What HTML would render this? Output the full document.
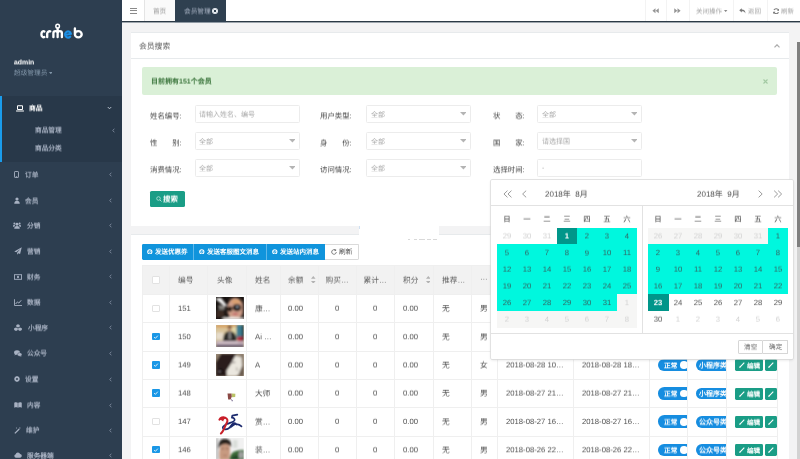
<!DOCTYPE html>
<html lang="zh-CN"><head><meta charset="utf-8"><title>会员管理</title>
<style>
html,body{margin:0;padding:0;background:#f3f3f4;}
body{width:800px;height:459px;overflow:hidden;position:relative;font-family:"Liberation Sans",sans-serif;-webkit-text-size-adjust:none;text-rendering:geometricPrecision;}
#page{position:absolute;left:0;top:0;width:800px;height:459px;overflow:hidden;background:#f3f3f4;}
#side{position:absolute;left:0;top:0;width:122px;height:459px;background:#2d3e50;overflow:hidden;}
.r{position:absolute;display:block;}
.t{position:absolute;white-space:nowrap;overflow:visible;will-change:transform;}
#dp{background:#fff;box-shadow:0 0 0 0.7px #dadada, 0 1px 3px rgba(0,0,0,.14);border-radius:1px;overflow:hidden;}
</style></head><body><div id="page">
<div id="side">
<div class="r" style="left:0px;top:95.7px;width:122px;height:66.6px;background:#283849;"></div>
<div class="r" style="left:0px;top:95.7px;width:2.4px;height:66.6px;background:#1a9cec;"></div>
<svg class="r" style="left:38px;top:22px" width="48" height="19" viewBox="38 22 48 19">
<g fill="none" stroke="#fff" stroke-width="2.35" stroke-linecap="round">
<path d="M44.4 31.4 A2.15 3.05 0 1 0 44.4 37"/>
<path d="M47.2 37.1 V33.5 A2.5 2.5 0 0 1 50.3 31.3"/>
<path d="M53.4 37.1 V33.3 A2.12 2.12 0 0 1 57.64 33.3 V37.1 M57.64 33.3 A2.12 2.12 0 0 1 61.88 33.3 V37.1 M57.64 33 V29"/>
<path d="M74.9 28.5 V34.4 M74.9 34.2 A3.4 3.1 0 1 0 78.3 31.1 A3.4 3.1 0 0 0 74.9 34.2"/>
</g>
<circle cx="57.64" cy="26.15" r="1.8" fill="none" stroke="#fff" stroke-width="1.5"/>
<path d="M65.4 35 L70.9 33.8 A2.95 3.1 0 1 0 70.3 36.5" fill="none" stroke="#1a8fe6" stroke-width="2.05" stroke-linecap="round"/>
</svg>
<div class="t" style="left:14px;top:57px;transform:translateY(0.48px) rotate(0.02deg);height:11.04px;line-height:11.04px;font-size:6.9px;color:#fff;font-weight:bold;">admin</div>
<div class="t" style="left:14px;top:69px;transform:translateY(0.08px) rotate(0.02deg);height:10.72px;line-height:10.72px;font-size:6.7px;color:#8095a8;font-weight:normal;">超级管理员</div>
<svg class="r" style="left:48.80px;top:71.80px" width="3.6" height="2.2" viewBox="0 0 3.6 2.2"><polygon points="0,0 3.6,0 1.8,2.2" fill="#8095a8"/></svg>
<svg class="r" style="left:16.2px;top:104.6px" width="8" height="7" viewBox="0 0 16 14"><path d="M3 1.5h10v7.5h-10z" fill="none" stroke="#fff" stroke-width="2"/><path d="M0 11h16v1.2a1 1 0 0 1-1 1h-14a1 1 0 0 1-1-1z" fill="#fff"/></svg>
<div class="t" style="left:28.5px;top:104px;transform:translateY(0.40px) rotate(0.02deg);height:10.88px;line-height:10.88px;font-size:6.8px;color:#fff;font-weight:bold;">商品</div>
<svg class="r" style="left:106.6px;top:106.4px" width="5" height="4" viewBox="0 0 10 8"><path d="M1.5 2 L5 5.6 L8.5 2" fill="none" stroke="#c4ccd8" stroke-width="1.8"/></svg>
<div class="t" style="left:35px;top:126px;transform:translateY(0.41px) rotate(0.02deg);height:10.72px;line-height:10.72px;font-size:6.7px;color:#a7b1c2;font-weight:600;">商品管理</div>
<div class="t" style="left:35px;top:144px;transform:translateY(0.45px) rotate(0.02deg);height:10.72px;line-height:10.72px;font-size:6.7px;color:#a7b1c2;font-weight:600;">商品分类</div>
<svg class="r" style="left:111.6px;top:127.5px" width="3" height="5" viewBox="0 0 6 10"><path d="M4.6 1.4 L1.6 5 L4.6 8.6" fill="none" stroke="#8f9bae" stroke-width="1.5"/></svg>
<svg class="r" style="left:14px;top:171.1px" width="5" height="7" viewBox="0 0 10 14"><rect x="1" y="1" width="8" height="12" rx="1.2" fill="none" stroke="#a7b1c2" stroke-width="1.8"/><rect x="3.5" y="10" width="3" height="1.4" fill="#a7b1c2"/></svg>
<div class="t" style="left:24.5px;top:171px;transform:translateY(0.19px) rotate(0.02deg);height:10.72px;line-height:10.72px;font-size:6.7px;color:#a7b1c2;font-weight:600;">订单</div>
<svg class="r" style="left:108.6px;top:172.1px" width="3" height="5" viewBox="0 0 6 10"><path d="M4.6 1.4 L1.6 5 L4.6 8.6" fill="none" stroke="#8f9bae" stroke-width="1.5"/></svg>
<svg class="r" style="left:13.6px;top:197.3px" width="6" height="7" viewBox="0 0 12 14"><circle cx="6" cy="4" r="3.2" fill="#a7b1c2"/><path d="M0.5 13.5c0-4 2-6 5.5-6s5.5 2 5.500 6z" fill="#a7b1c2"/></svg>
<div class="t" style="left:24.5px;top:197px;transform:translateY(0.34px) rotate(0.02deg);height:10.72px;line-height:10.72px;font-size:6.7px;color:#a7b1c2;font-weight:600;">会员</div>
<svg class="r" style="left:108.6px;top:198.3px" width="3" height="5" viewBox="0 0 6 10"><path d="M4.6 1.4 L1.6 5 L4.6 8.6" fill="none" stroke="#8f9bae" stroke-width="1.5"/></svg>
<svg class="r" style="left:13.4px;top:222.0px" width="8" height="7" viewBox="0 0 16 14"><circle cx="8" cy="4.4" r="2.9" fill="#a7b1c2"/><circle cx="2.8" cy="3" r="2" fill="#a7b1c2"/><circle cx="13.2" cy="3" r="2" fill="#a7b1c2"/><path d="M2.5 13.5c0-3.6 2-5.4 5.500-5.400s5.500 1.800 5.500 5.400z" fill="#a7b1c2"/><path d="M0 8.500c0-2 1-3 2.800-3l1.400 1.600-1.400 2.400h-2.800zM16 8.500c0-2-1-3-2.800-3l-1.400 1.600 1.400 2.400h2.800z" fill="#a7b1c2"/></svg>
<div class="t" style="left:27px;top:222px;transform:translateY(0.10px) rotate(0.02deg);height:10.72px;line-height:10.72px;font-size:6.7px;color:#a7b1c2;font-weight:600;">分销</div>
<svg class="r" style="left:108.6px;top:223.0px" width="3" height="5" viewBox="0 0 6 10"><path d="M4.6 1.4 L1.6 5 L4.6 8.6" fill="none" stroke="#8f9bae" stroke-width="1.5"/></svg>
<svg class="r" style="left:13.6px;top:247.3px" width="8" height="8" viewBox="0 0 16 16"><path d="M15.500 0.500 L0.500 8.800 L4.600 10.600 L12.500 3.800 L6.200 11.500 L6.200 15.500 L8.600 12.500 L12.200 14 z" fill="#a7b1c2"/></svg>
<div class="t" style="left:27px;top:247px;transform:translateY(0.71px) rotate(0.02deg);height:10.72px;line-height:10.72px;font-size:6.7px;color:#a7b1c2;font-weight:600;">营销</div>
<svg class="r" style="left:108.6px;top:248.8px" width="3" height="5" viewBox="0 0 6 10"><path d="M4.6 1.4 L1.6 5 L4.6 8.6" fill="none" stroke="#8f9bae" stroke-width="1.5"/></svg>
<svg class="r" style="left:13.6px;top:273.8px" width="8" height="6" viewBox="0 0 16 12"><rect x="0.900" y="1.400" width="14.200" height="9.200" fill="none" stroke="#a7b1c2" stroke-width="1.8"/><ellipse cx="8" cy="6" rx="2" ry="2.700" fill="#a7b1c2"/></svg>
<div class="t" style="left:27px;top:273px;transform:translateY(0.44px) rotate(0.02deg);height:10.72px;line-height:10.72px;font-size:6.7px;color:#a7b1c2;font-weight:600;">财务</div>
<svg class="r" style="left:108.6px;top:274.3px" width="3" height="5" viewBox="0 0 6 10"><path d="M4.6 1.4 L1.6 5 L4.6 8.6" fill="none" stroke="#8f9bae" stroke-width="1.5"/></svg>
<svg class="r" style="left:13.6px;top:298.7px" width="8" height="7" viewBox="0 0 16 14"><path d="M1 0.500 V13 H16" fill="none" stroke="#a7b1c2" stroke-width="1.800"/><path d="M3.200 10 L7 5.800 L9.600 8.200 L14.400 2.600" fill="none" stroke="#a7b1c2" stroke-width="2"/></svg>
<div class="t" style="left:27px;top:298px;transform:translateY(0.63px) rotate(0.02deg);height:10.72px;line-height:10.72px;font-size:6.7px;color:#a7b1c2;font-weight:600;">数据</div>
<svg class="r" style="left:108.6px;top:299.7px" width="3" height="5" viewBox="0 0 6 10"><path d="M4.6 1.4 L1.6 5 L4.6 8.6" fill="none" stroke="#8f9bae" stroke-width="1.5"/></svg>
<svg class="r" style="left:14px;top:324.3px" width="8" height="7" viewBox="0 0 16 14"><path d="M8 0.300 l3.400 1.600 v3.600 l-3.400 1.700 l-3.400-1.700 v-3.600z M4 6.800 l3.600 1.700 v3.700 l-3.600 1.700 l-3.700-1.700 v-3.700z M12 6.800 l3.700 1.700 v3.700 l-3.700 1.700 l-3.600-1.700 v-3.700z" fill="#a7b1c2"/></svg>
<div class="t" style="left:28px;top:324px;transform:translateY(0.27px) rotate(0.02deg);height:10.72px;line-height:10.72px;font-size:6.7px;color:#a7b1c2;font-weight:600;">小程序</div>
<svg class="r" style="left:108.6px;top:325.3px" width="3" height="5" viewBox="0 0 6 10"><path d="M4.6 1.4 L1.6 5 L4.6 8.6" fill="none" stroke="#8f9bae" stroke-width="1.5"/></svg>
<svg class="r" style="left:13.8px;top:349.7px" width="8" height="7" viewBox="0 0 16 14"><ellipse cx="6" cy="5" rx="5.800" ry="4.700" fill="#a7b1c2"/><path d="M2 8l-0.800 2.800 3-1.600z" fill="#a7b1c2"/><ellipse cx="11.400" cy="9" rx="4.500" ry="3.700" fill="#a7b1c2" stroke="#2f4050" stroke-width="0.800"/><path d="M14 11.500l0.800 2-2.400-1z" fill="#a7b1c2"/></svg>
<div class="t" style="left:27px;top:349px;transform:translateY(0.53px) rotate(0.02deg);height:10.72px;line-height:10.72px;font-size:6.7px;color:#a7b1c2;font-weight:600;">公众号</div>
<svg class="r" style="left:108.6px;top:350.7px" width="3" height="5" viewBox="0 0 6 10"><path d="M4.6 1.4 L1.6 5 L4.6 8.6" fill="none" stroke="#8f9bae" stroke-width="1.5"/></svg>
<svg class="r" style="left:14px;top:376.1px" width="6" height="6" viewBox="0 0 12 12"><circle cx="6" cy="6" r="3.400" fill="none" stroke="#a7b1c2" stroke-width="3"/><g stroke="#a7b1c2" stroke-width="2.400" fill="none"><path d="M6 0v2.200M6 9.800v2.200M0 6h2.200M9.800 6h2.200M1.760 1.760l1.560 1.560M8.680 8.680l1.560 1.560M10.240 1.760l-1.560 1.560M3.320 8.680l-1.560 1.560"/></g></svg>
<div class="t" style="left:25px;top:375px;transform:translateY(0.59px) rotate(0.02deg);height:10.72px;line-height:10.72px;font-size:6.7px;color:#a7b1c2;font-weight:600;">设置</div>
<svg class="r" style="left:108.6px;top:376.6px" width="3" height="5" viewBox="0 0 6 10"><path d="M4.6 1.4 L1.6 5 L4.6 8.6" fill="none" stroke="#8f9bae" stroke-width="1.5"/></svg>
<svg class="r" style="left:13.8px;top:402.0px" width="8" height="6" viewBox="0 0 16 12"><path d="M0.500 1.500 C3 0.300 5.500 0.300 7.500 1.700 V11.500 C5.500 10.300 3 10.300 0.500 11.300z M15.500 1.500 C13 0.300 10.500 0.300 8.500 1.700 V11.500 C10.500 10.300 13 10.300 15.500 11.300z" fill="#a7b1c2"/></svg>
<div class="t" style="left:27px;top:401px;transform:translateY(0.44px) rotate(0.02deg);height:10.72px;line-height:10.72px;font-size:6.7px;color:#a7b1c2;font-weight:600;">内容</div>
<svg class="r" style="left:108.6px;top:402.5px" width="3" height="5" viewBox="0 0 6 10"><path d="M4.6 1.4 L1.6 5 L4.6 8.6" fill="none" stroke="#8f9bae" stroke-width="1.5"/></svg>
<svg class="r" style="left:14px;top:426.5px" width="7" height="7" viewBox="0 0 14 14"><path d="M0.800 11.800 L9.600 3 L11.400 4.800 L2.600 13.600z" fill="#a7b1c2"/><path d="M11.800 0l.6 1.500 1.500.6-1.500.6-.6 1.500-.6-1.500-1.500-.6 1.500-.6zM5 0.600l.5 1.100 1.100.5-1.100.5-.5 1.100-.5-1.100-1.100-.5 1.100-.5z" fill="#a7b1c2"/></svg>
<div class="t" style="left:25.5px;top:426px;transform:translateY(0.45px) rotate(0.02deg);height:10.72px;line-height:10.72px;font-size:6.7px;color:#a7b1c2;font-weight:600;">维护</div>
<svg class="r" style="left:108.6px;top:427.5px" width="3" height="5" viewBox="0 0 6 10"><path d="M4.6 1.4 L1.6 5 L4.6 8.6" fill="none" stroke="#8f9bae" stroke-width="1.5"/></svg>
<svg class="r" style="left:13.8px;top:452.4px" width="8" height="6" viewBox="0 0 16 12"><path d="M4 11.500 a3.600 3.600 0 0 1-.6-7.100 a4.600 4.600 0 0 1 8.800-.6 a3.900 3.900 0 0 1 .200 7.700z" fill="#a7b1c2"/></svg>
<div class="t" style="left:27px;top:451px;transform:translateY(0.96px) rotate(0.02deg);height:10.72px;line-height:10.72px;font-size:6.7px;color:#a7b1c2;font-weight:600;">服务器端</div>
<svg class="r" style="left:108.6px;top:452.9px" width="3" height="5" viewBox="0 0 6 10"><path d="M4.6 1.4 L1.6 5 L4.6 8.6" fill="none" stroke="#8f9bae" stroke-width="1.5"/></svg>
</div>
<div class="r" style="left:122px;top:0px;width:678px;height:21.3px;background:#fff;"></div>
<div class="r" style="left:122px;top:21px;width:678px;height:1px;background:#2c3a46;"></div>
<div class="r" style="left:122px;top:22px;width:678px;height:1px;background:#9ea6ad;"></div>
<div class="r" style="left:129.8px;top:8.0px;width:7.4px;height:1.0px;background:#8a8a8a;"></div>
<div class="r" style="left:129.8px;top:10.4px;width:7.4px;height:1.0px;background:#8a8a8a;"></div>
<div class="r" style="left:129.8px;top:12.8px;width:7.4px;height:1.0px;background:#8a8a8a;"></div>
<div class="r" style="left:144px;top:0px;width:31.2px;height:21.3px;background:#fafafa;border-left:0.6px solid #e4e4e4;box-sizing:border-box"></div>
<div class="t" style="left:144px;top:7px;transform:translateY(0.43px) rotate(0.02deg);height:10.72px;line-height:10.72px;font-size:6.7px;color:#999;font-weight:normal;width:31.2px;text-align:center;">首页</div>
<div class="r" style="left:175.2px;top:0px;width:50.6px;height:22px;background:#2f4050;"></div>
<div class="r" style="left:175.2px;top:22px;width:50.6px;height:1px;background:#8f99a3;"></div>
<div class="t" style="left:183.6px;top:7px;transform:translateY(0.48px) rotate(0.02deg);height:10.72px;line-height:10.72px;font-size:6.7px;color:#a7b1c2;font-weight:normal;">会员管理</div>
<svg class="r" style="left:212px;top:8px" width="6" height="6" viewBox="0 0 12 12"><circle cx="6" cy="6" r="6" fill="#e9edf2"/><path d="M3.700 3.700 L8.300 8.300 M8.300 3.700 L3.700 8.300" stroke="#2f4050" stroke-width="2"/></svg>
<div class="r" style="left:644.5px;top:0px;width:0.6px;height:21px;background:#f3f3f3;"></div>
<div class="r" style="left:666.4px;top:0px;width:0.6px;height:21px;background:#f3f3f3;"></div>
<div class="r" style="left:689.2px;top:0px;width:0.6px;height:21px;background:#f3f3f3;"></div>
<div class="r" style="left:733.2px;top:0px;width:0.6px;height:21px;background:#f3f3f3;"></div>
<div class="r" style="left:767px;top:0px;width:0.6px;height:21px;background:#f3f3f3;"></div>
<svg class="r" style="left:652px;top:8.2px" width="7" height="5.600" viewBox="0 0 14 11"><path d="M7 0.500 V10.500 L0.800 5.500z M13.500 0.500 V10.500 L7.300 5.500z" fill="#959595"/></svg>
<svg class="r" style="left:674px;top:8.2px" width="7" height="5.600" viewBox="0 0 14 11"><path d="M0.500 0.500 V10.500 L6.700 5.500z M7 0.500 V10.500 L13.200 5.500z" fill="#959595"/></svg>
<div class="t" style="left:696px;top:7px;transform:translateY(0.49px) rotate(0.02deg);height:10.40px;line-height:10.40px;font-size:6.5px;color:#a6a6a6;font-weight:normal;">关闭操作</div>
<svg class="r" style="left:724.30px;top:10.10px" width="3.4" height="2.1" viewBox="0 0 3.4 2.1"><polygon points="0,0 3.4,0 1.7,2.1" fill="#8a8a8a"/></svg>
<svg class="r" style="left:739px;top:7.600px" width="7" height="6" viewBox="0 0 14 12"><path d="M5.500 0.500 L0.500 4.700 L5.500 8.900 V6.300 C9.500 6.300 11.500 7.500 12.800 11 C13 6 10.500 3.300 5.500 3.100z" fill="#777"/></svg>
<div class="t" style="left:747.6px;top:7px;transform:translateY(0.38px) rotate(0.02deg);height:10.40px;line-height:10.40px;font-size:6.5px;color:#a6a6a6;font-weight:normal;">返回</div>
<svg class="r" style="left:773px;top:7.800px" width="6.400" height="6.400" viewBox="0 0 14 14"><path d="M12.200 5.200 A5.600 5.600 0 0 0 2 4.600 M1.800 8.800 A5.600 5.600 0 0 0 12 9.400" fill="none" stroke="#777" stroke-width="2.200"/><path d="M13.600 1 V6 H8.600z M0.400 13 V8 H5.400z" fill="#777"/></svg>
<div class="t" style="left:780.6px;top:7px;transform:translateY(0.40px) rotate(0.02deg);height:10.40px;line-height:10.40px;font-size:6.5px;color:#a6a6a6;font-weight:normal;">刷新</div>
<div class="r" style="left:131px;top:32.2px;width:657.5px;height:193.4px;background:#fff;"></div>
<div class="r" style="left:131px;top:32.2px;width:657.5px;height:1.1px;background:#e7eaec;"></div>
<div class="r" style="left:131px;top:58.0px;width:657.5px;height:0.6px;background:#e7eaec;"></div>
<div class="t" style="left:139px;top:40px;transform:translateY(0.72px) rotate(0.02deg);height:12.48px;line-height:12.48px;font-size:7.8px;color:#555;font-weight:normal;">会员搜索</div>
<svg class="r" style="left:774px;top:44px" width="6" height="4" viewBox="0 0 12 8"><path d="M1 6.800 L6 1.600 L11 6.800" fill="none" stroke="#adadad" stroke-width="2.500"/></svg>
<div class="r" style="left:142px;top:67px;width:635px;height:27.6px;background:#daf0d7;border-radius:2px"></div>
<div class="t" style="left:151px;top:76px;transform:translateY(0.57px) rotate(0.02deg);height:11.20px;line-height:11.20px;font-size:7.0px;color:#3c763d;font-weight:bold;">目前拥有151个会员</div>
<svg class="r" style="left:762.600px;top:78.600px" width="5" height="5" viewBox="0 0 10 10"><path d="M1 1 L9 9 M9 1 L1 9" stroke="#a3c9a3" stroke-width="2.200"/></svg>
<div class="t" style="left:150.4px;top:110px;transform:translateY(0.52px) rotate(0.02deg);height:11.84px;line-height:11.84px;font-size:7.4px;color:#454545;font-weight:normal;white-space:nowrap;">姓名编号:</div>
<div class="r" style="left:194.5px;top:105.2px;width:105.5px;height:18.1px;background:#fff;border:0.700px solid #ececec;border-radius:1.500px;box-sizing:border-box"></div>
<div class="t" style="left:199.1px;top:109px;transform:translateY(0.74px) rotate(0.02deg);height:11.20px;line-height:11.20px;font-size:7.0px;color:#a8a8a8;font-weight:normal;">请输入姓名、编号</div>
<div class="t" style="left:150.4px;top:137px;transform:translateY(0.46px) rotate(0.02deg);height:11.84px;line-height:11.84px;font-size:7.4px;color:#454545;font-weight:normal;white-space:nowrap;">性&emsp;&emsp;别:</div>
<div class="r" style="left:194.5px;top:132.2px;width:105.5px;height:18.1px;background:#fff;border:0.700px solid #ececec;border-radius:1.500px;box-sizing:border-box"></div>
<div class="t" style="left:199.1px;top:137px;transform:translateY(0.06px) rotate(0.02deg);height:11.20px;line-height:11.20px;font-size:7.0px;color:#a8a8a8;font-weight:normal;">全部</div>
<svg class="r" style="left:288.50px;top:139.40px" width="6.8" height="3.4" viewBox="0 0 6.8 3.4"><polygon points="0,0 6.8,0 3.4,3.4" fill="#b4b4b4"/></svg>
<div class="t" style="left:150.4px;top:164px;transform:translateY(0.28px) rotate(0.02deg);height:11.84px;line-height:11.84px;font-size:7.4px;color:#454545;font-weight:normal;white-space:nowrap;">消费情况:</div>
<div class="r" style="left:194.5px;top:159.2px;width:105.5px;height:18.1px;background:#fff;border:0.700px solid #ececec;border-radius:1.500px;box-sizing:border-box"></div>
<div class="t" style="left:199.1px;top:163px;transform:translateY(0.85px) rotate(0.02deg);height:11.20px;line-height:11.20px;font-size:7.0px;color:#a8a8a8;font-weight:normal;">全部</div>
<svg class="r" style="left:288.50px;top:166.30px" width="6.8" height="3.4" viewBox="0 0 6.8 3.4"><polygon points="0,0 6.8,0 3.4,3.4" fill="#b4b4b4"/></svg>
<div class="t" style="left:320.4px;top:110px;transform:translateY(0.41px) rotate(0.02deg);height:11.84px;line-height:11.84px;font-size:7.4px;color:#454545;font-weight:normal;white-space:nowrap;">用户类型:</div>
<div class="r" style="left:366.2px;top:105.2px;width:105px;height:18.1px;background:#fff;border:0.700px solid #ececec;border-radius:1.500px;box-sizing:border-box"></div>
<div class="t" style="left:370.8px;top:110px;transform:translateY(0.06px) rotate(0.02deg);height:11.20px;line-height:11.20px;font-size:7.0px;color:#a8a8a8;font-weight:normal;">全部</div>
<svg class="r" style="left:459.70px;top:112.40px" width="6.8" height="3.4" viewBox="0 0 6.8 3.4"><polygon points="0,0 6.8,0 3.4,3.4" fill="#b4b4b4"/></svg>
<div class="t" style="left:320.4px;top:137px;transform:translateY(0.58px) rotate(0.02deg);height:11.84px;line-height:11.84px;font-size:7.4px;color:#454545;font-weight:normal;white-space:nowrap;">身&emsp;&emsp;份:</div>
<div class="r" style="left:366.2px;top:132.2px;width:105px;height:18.1px;background:#fff;border:0.700px solid #ececec;border-radius:1.500px;box-sizing:border-box"></div>
<div class="t" style="left:370.8px;top:137px;transform:translateY(0.06px) rotate(0.02deg);height:11.20px;line-height:11.20px;font-size:7.0px;color:#a8a8a8;font-weight:normal;">全部</div>
<svg class="r" style="left:459.70px;top:139.40px" width="6.8" height="3.4" viewBox="0 0 6.8 3.4"><polygon points="0,0 6.8,0 3.4,3.4" fill="#b4b4b4"/></svg>
<div class="t" style="left:320.4px;top:164px;transform:translateY(0.22px) rotate(0.02deg);height:11.84px;line-height:11.84px;font-size:7.4px;color:#454545;font-weight:normal;white-space:nowrap;">访问情况:</div>
<div class="r" style="left:366.2px;top:159.2px;width:105px;height:18.1px;background:#fff;border:0.700px solid #ececec;border-radius:1.500px;box-sizing:border-box"></div>
<div class="t" style="left:370.8px;top:163px;transform:translateY(0.85px) rotate(0.02deg);height:11.20px;line-height:11.20px;font-size:7.0px;color:#a8a8a8;font-weight:normal;">全部</div>
<svg class="r" style="left:459.70px;top:166.30px" width="6.8" height="3.4" viewBox="0 0 6.8 3.4"><polygon points="0,0 6.8,0 3.4,3.4" fill="#b4b4b4"/></svg>
<div class="t" style="left:493.4px;top:110px;transform:translateY(0.40px) rotate(0.02deg);height:11.84px;line-height:11.84px;font-size:7.4px;color:#454545;font-weight:normal;white-space:nowrap;">状&emsp;&emsp;态:</div>
<div class="r" style="left:537px;top:105.2px;width:105.2px;height:18.1px;background:#fff;border:0.700px solid #ececec;border-radius:1.500px;box-sizing:border-box"></div>
<div class="t" style="left:541.6px;top:110px;transform:translateY(0.06px) rotate(0.02deg);height:11.20px;line-height:11.20px;font-size:7.0px;color:#a8a8a8;font-weight:normal;">全部</div>
<svg class="r" style="left:630.70px;top:112.40px" width="6.8" height="3.4" viewBox="0 0 6.8 3.4"><polygon points="0,0 6.8,0 3.4,3.4" fill="#b4b4b4"/></svg>
<div class="t" style="left:493.4px;top:137px;transform:translateY(0.44px) rotate(0.02deg);height:11.84px;line-height:11.84px;font-size:7.4px;color:#454545;font-weight:normal;white-space:nowrap;">国&emsp;&emsp;家:</div>
<div class="r" style="left:537px;top:132.2px;width:105.2px;height:18.1px;background:#fff;border:0.700px solid #ececec;border-radius:1.500px;box-sizing:border-box"></div>
<div class="t" style="left:541.6px;top:136px;transform:translateY(0.69px) rotate(0.02deg);height:11.20px;line-height:11.20px;font-size:7.0px;color:#a8a8a8;font-weight:normal;">请选择国</div>
<svg class="r" style="left:630.70px;top:139.40px" width="6.8" height="3.4" viewBox="0 0 6.8 3.4"><polygon points="0,0 6.8,0 3.4,3.4" fill="#b4b4b4"/></svg>
<div class="t" style="left:493.4px;top:164px;transform:translateY(0.27px) rotate(0.02deg);height:11.84px;line-height:11.84px;font-size:7.4px;color:#454545;font-weight:normal;white-space:nowrap;">选择时间:</div>
<div class="r" style="left:537px;top:159.2px;width:105.2px;height:18.1px;background:#fff;border:0.700px solid #ececec;border-radius:1.500px;box-sizing:border-box"></div>
<div class="t" style="left:541.6px;top:162px;transform:translateY(0.85px) rotate(0.02deg);height:11.20px;line-height:11.20px;font-size:7.0px;color:#a8a8a8;font-weight:normal;">-</div>
<div class="r" style="left:150px;top:190.5px;width:35px;height:16.4px;background:#1a9d86;border-radius:1.600px"></div>
<svg class="r" style="left:155.600px;top:195.600px" width="6" height="6" viewBox="0 0 12 12"><circle cx="5" cy="5" r="3.600" fill="none" stroke="#d9f3ec" stroke-width="1.300"/><path d="M7.800 7.800 L11 11" stroke="#d9f3ec" stroke-width="1.500"/></svg>
<div class="t" style="left:163.4px;top:193px;transform:translateY(0.57px) rotate(0.02deg);height:11.84px;line-height:11.84px;font-size:7.4px;color:#fff;font-weight:bold;">搜索</div>
<div class="r" style="left:131px;top:234.3px;width:657.5px;height:230px;background:#fff;"></div>
<div class="r" style="left:131px;top:234.3px;width:657.5px;height:1.1px;background:#e7eaec;"></div>
<div class="r" style="left:358.8px;top:212px;width:80px;height:27px;background:#fff;"></div>
<div class="r" style="left:408px;top:238.7px;width:2px;height:0.8px;background:#d9d9d9;"></div>
<div class="r" style="left:413.5px;top:238.7px;width:3px;height:0.8px;background:#d9d9d9;"></div>
<div class="r" style="left:419px;top:238.7px;width:5.5px;height:0.8px;background:#d9d9d9;"></div>
<div class="r" style="left:427px;top:238.7px;width:4px;height:0.8px;background:#d9d9d9;"></div>
<div class="r" style="left:432.5px;top:238.7px;width:4.5px;height:0.8px;background:#d9d9d9;"></div>
<div class="r" style="left:359px;top:225.6px;width:0.7px;height:3px;background:#cfe0f2;"></div>
<div class="r" style="left:142px;top:243.7px;width:183px;height:15.9px;background:#1094dc;border-radius:1.400px 0 0 1.400px"></div>
<div class="r" style="left:193px;top:243.7px;width:0.6px;height:15.9px;background:#5fb8ea;"></div>
<div class="r" style="left:266.2px;top:243.7px;width:0.6px;height:15.9px;background:#5fb8ea;"></div>
<svg class="r" style="left:147.4px;top:248.8px" width="5.600" height="5.600" viewBox="0 0 10 10"><circle cx="5" cy="5" r="3.800" fill="none" stroke="#fff" stroke-width="1.900"/><path d="M3 4.100 L5 6.200 L7 4.100" fill="none" stroke="#fff" stroke-width="1.600"/></svg>
<div class="t" style="left:155px;top:247px;transform:translateY(0.92px) rotate(0.02deg);height:10.40px;line-height:10.40px;font-size:6.5px;color:#fff;font-weight:bold;">发送优惠券</div>
<svg class="r" style="left:199.4px;top:248.8px" width="5.600" height="5.600" viewBox="0 0 10 10"><circle cx="5" cy="5" r="3.800" fill="none" stroke="#fff" stroke-width="1.900"/><path d="M3 4.100 L5 6.200 L7 4.100" fill="none" stroke="#fff" stroke-width="1.600"/></svg>
<div class="t" style="left:207px;top:247px;transform:translateY(0.98px) rotate(0.02deg);height:10.40px;line-height:10.40px;font-size:6.5px;color:#fff;font-weight:bold;">发送客服图文消息</div>
<svg class="r" style="left:272.2px;top:248.8px" width="5.600" height="5.600" viewBox="0 0 10 10"><circle cx="5" cy="5" r="3.800" fill="none" stroke="#fff" stroke-width="1.900"/><path d="M3 4.100 L5 6.200 L7 4.100" fill="none" stroke="#fff" stroke-width="1.600"/></svg>
<div class="t" style="left:279.8px;top:247px;transform:translateY(0.94px) rotate(0.02deg);height:10.40px;line-height:10.40px;font-size:6.5px;color:#fff;font-weight:bold;">发送站内消息</div>
<div class="r" style="left:325px;top:243.7px;width:33.8px;height:15.9px;background:#fff;border:0.600px solid #dadada;border-left:none;box-sizing:border-box;border-radius:0 1.400px 1.400px 0"></div>
<svg class="r" style="left:331.400px;top:248.800px" width="6" height="6" viewBox="0 0 12 12"><path d="M10.600 6 A4.600 4.600 0 1 1 8.800 2.300" fill="none" stroke="#555" stroke-width="1.500"/><path d="M7 0 L11 2.200 L7.600 4.700z" fill="#555"/></svg>
<div class="t" style="left:339.2px;top:247px;transform:translateY(0.99px) rotate(0.02deg);height:10.72px;line-height:10.72px;font-size:6.7px;color:#444;font-weight:normal;">刷新</div>
<div class="r" style="left:142px;top:265px;width:635.5px;height:29.5px;background:#f2f2f2;"></div>
<div class="r" style="left:142px;top:265px;width:635.5px;height:0.6px;background:#efefef;"></div>
<div class="r" style="left:142px;top:294.2px;width:635.5px;height:0.6px;background:#efefef;"></div>
<div class="r" style="left:142px;top:322.46999999999997px;width:635.5px;height:0.6px;background:#efefef;"></div>
<div class="r" style="left:142px;top:350.74px;width:635.5px;height:0.6px;background:#efefef;"></div>
<div class="r" style="left:142px;top:379.01px;width:635.5px;height:0.6px;background:#efefef;"></div>
<div class="r" style="left:142px;top:407.28px;width:635.5px;height:0.6px;background:#efefef;"></div>
<div class="r" style="left:142px;top:435.55px;width:635.5px;height:0.6px;background:#efefef;"></div>
<div class="r" style="left:142px;top:463.82px;width:635.5px;height:0.6px;background:#efefef;"></div>
<div class="r" style="left:141.7px;top:265px;width:0.6px;height:200px;background:#efefef;"></div>
<div class="r" style="left:169.2px;top:265px;width:0.6px;height:200px;background:#efefef;"></div>
<div class="r" style="left:206.7px;top:265px;width:0.6px;height:200px;background:#efefef;"></div>
<div class="r" style="left:246.0px;top:265px;width:0.6px;height:200px;background:#efefef;"></div>
<div class="r" style="left:279.7px;top:265px;width:0.6px;height:200px;background:#efefef;"></div>
<div class="r" style="left:317.7px;top:265px;width:0.6px;height:200px;background:#efefef;"></div>
<div class="r" style="left:356.0px;top:265px;width:0.6px;height:200px;background:#efefef;"></div>
<div class="r" style="left:394.2px;top:265px;width:0.6px;height:200px;background:#efefef;"></div>
<div class="r" style="left:433.0px;top:265px;width:0.6px;height:200px;background:#efefef;"></div>
<div class="r" style="left:471.0px;top:265px;width:0.6px;height:200px;background:#efefef;"></div>
<div class="r" style="left:497.3px;top:265px;width:0.6px;height:200px;background:#efefef;"></div>
<div class="r" style="left:573.1px;top:265px;width:0.6px;height:200px;background:#efefef;"></div>
<div class="r" style="left:649.3000000000001px;top:265px;width:0.6px;height:200px;background:#efefef;"></div>
<div class="r" style="left:687.2px;top:265px;width:0.6px;height:200px;background:#efefef;"></div>
<div class="r" style="left:726.1px;top:265px;width:0.6px;height:200px;background:#efefef;"></div>
<div class="r" style="left:777.2px;top:265px;width:0.6px;height:200px;background:#efefef;"></div>
<div class="r" style="left:152px;top:276.2px;width:7.6px;height:7.6px;background:#fff;border:0.600px solid #e2e2e2;border-radius:1px;box-sizing:border-box"></div>
<div class="t" style="left:178px;top:274px;transform:translateY(0.74px) rotate(0.02deg);height:12.32px;line-height:12.32px;font-size:7.7px;color:#5c5c5c;font-weight:normal;">编号</div>
<div class="t" style="left:216.5px;top:274px;transform:translateY(0.83px) rotate(0.02deg);height:12.32px;line-height:12.32px;font-size:7.7px;color:#5c5c5c;font-weight:normal;">头像</div>
<div class="t" style="left:254.6px;top:274px;transform:translateY(0.70px) rotate(0.02deg);height:12.32px;line-height:12.32px;font-size:7.7px;color:#5c5c5c;font-weight:normal;">姓名</div>
<div class="t" style="left:288.3px;top:274px;transform:translateY(0.66px) rotate(0.02deg);height:12.32px;line-height:12.32px;font-size:7.7px;color:#5c5c5c;font-weight:normal;">余额</div>
<div class="t" style="left:318px;top:274px;transform:translateY(0.65px) rotate(0.02deg);height:12.32px;line-height:12.32px;font-size:7.7px;color:#5c5c5c;font-weight:normal;width:38.3px;text-align:center;">购买…</div>
<div class="t" style="left:356.3px;top:274px;transform:translateY(0.82px) rotate(0.02deg);height:12.32px;line-height:12.32px;font-size:7.7px;color:#5c5c5c;font-weight:normal;width:38.2px;text-align:center;">累计…</div>
<div class="t" style="left:403.4px;top:274px;transform:translateY(0.79px) rotate(0.02deg);height:12.32px;line-height:12.32px;font-size:7.7px;color:#5c5c5c;font-weight:normal;">积分</div>
<div class="t" style="left:441.7px;top:274px;transform:translateY(0.76px) rotate(0.02deg);height:12.32px;line-height:12.32px;font-size:7.7px;color:#5c5c5c;font-weight:normal;">推荐…</div>
<div class="t" style="left:479.5px;top:271px;transform:translateY(0.76px) rotate(0.02deg);height:12.32px;line-height:12.32px;font-size:7.7px;color:#5c5c5c;font-weight:normal;">…</div>
<svg class="r" style="left:311.00px;top:276.45px" width="4.6" height="2.7" viewBox="0 0 4.6 2.7"><polygon points="0,2.7 2.3,0 4.6,2.7" fill="#b2b2b2"/></svg><svg class="r" style="left:311.00px;top:280.55px" width="4.6" height="2.7" viewBox="0 0 4.6 2.7"><polygon points="0,0 4.6,0 2.3,2.7" fill="#b2b2b2"/></svg>
<svg class="r" style="left:425.90px;top:276.45px" width="4.6" height="2.7" viewBox="0 0 4.6 2.7"><polygon points="0,2.7 2.3,0 4.6,2.7" fill="#b2b2b2"/></svg><svg class="r" style="left:425.90px;top:280.55px" width="4.6" height="2.7" viewBox="0 0 4.6 2.7"><polygon points="0,0 4.6,0 2.3,2.7" fill="#b2b2b2"/></svg>
<div class="r" style="left:152px;top:304.53499999999997px;width:7.6px;height:7.6px;background:#fff;border:0.600px solid #e2e2e2;border-radius:1px;box-sizing:border-box"></div>
<div class="t" style="left:178px;top:302px;transform:translateY(0.89px) rotate(0.02deg);height:12.32px;line-height:12.32px;font-size:7.7px;color:#4f4f4f;font-weight:normal;">151</div>
<svg class="r" style="left:216.2px;top:297.2px" width="27.8" height="21.9" viewBox="0 0 27.8 21.9"><defs><filter id="bl1" x="-10%" y="-10%" width="120%" height="120%"><feGaussianBlur stdDeviation="0.95"/></filter><clipPath id="cp1"><rect width="27.8" height="21.9"/></clipPath></defs><g clip-path="url(#cp1)"><rect x="-2" y="-2" width="31.8" height="25.9" fill="#15100e"/><g filter="url(#bl1)">
<path d="M-1 1.500 L5 0.800 L11 8.500 L8.500 9.500 Z" fill="#f2f2f2"/>
<path d="M2 8 L9 9 L9 12.500 L3 12.500 Z" fill="#8a8782"/>
<path d="M0 13 L8 13 L9 20 L0 21 Z" fill="#3b2b23"/>
<ellipse cx="19.200" cy="11.800" rx="8.200" ry="11" fill="#cf9e88"/>
<ellipse cx="20" cy="4.500" rx="4.500" ry="2.200" fill="#dba070"/>
<path d="M11 3 C14 -1 24 -1.500 28 3 L28 0 L11 0 Z" fill="#1a1412"/>
<rect x="26.600" y="0" width="2" height="22" fill="#1f1815"/>
<ellipse cx="13.600" cy="12" rx="2.700" ry="2.800" fill="#2a1a15"/>
<ellipse cx="21" cy="10.600" rx="4.200" ry="3.700" fill="#1c1413"/>
<ellipse cx="21.300" cy="9.800" rx="1.300" ry="0.900" fill="#b8c6d6"/>
<path d="M15.800 10.800 L17 10.400" stroke="#2a1a15" stroke-width="0.900"/>
<ellipse cx="19.300" cy="17" rx="2.700" ry="1.100" fill="#c2606a"/>
<path d="M6 22 C8 19.500 14 19.800 28 21 L28 23 L6 23 Z" fill="#ece8e4"/>
</g></g></svg>
<div class="t" style="left:254.6px;top:303px;transform:translateY(0.37px) rotate(0.02deg);height:12.32px;line-height:12.32px;font-size:7.7px;color:#4f4f4f;font-weight:normal;">康…</div>
<div class="t" style="left:288.3px;top:302px;transform:translateY(0.81px) rotate(0.02deg);height:12.32px;line-height:12.32px;font-size:7.7px;color:#4f4f4f;font-weight:normal;">0.00</div>
<div class="t" style="left:318px;top:302px;transform:translateY(0.74px) rotate(0.02deg);height:12.32px;line-height:12.32px;font-size:7.7px;color:#4f4f4f;font-weight:normal;width:38.3px;text-align:center;">0</div>
<div class="t" style="left:356.3px;top:302px;transform:translateY(0.74px) rotate(0.02deg);height:12.32px;line-height:12.32px;font-size:7.7px;color:#4f4f4f;font-weight:normal;width:38.2px;text-align:center;">0</div>
<div class="t" style="left:402.9px;top:302px;transform:translateY(0.81px) rotate(0.02deg);height:12.32px;line-height:12.32px;font-size:7.7px;color:#4f4f4f;font-weight:normal;">0.00</div>
<div class="t" style="left:441.6px;top:303px;transform:translateY(0.15px) rotate(0.02deg);height:12.32px;line-height:12.32px;font-size:7.7px;color:#4f4f4f;font-weight:normal;">无</div>
<div class="t" style="left:479.6px;top:302px;transform:translateY(0.92px) rotate(0.02deg);height:12.32px;line-height:12.32px;font-size:7.7px;color:#4f4f4f;font-weight:normal;">男</div>
<div class="r" style="left:152px;top:332.80499999999995px;width:7.6px;height:7.6px;background:#1a97e6;border-radius:1px"></div>
<svg class="r" style="left:152.900px;top:333.70px" width="5.800" height="5.800" viewBox="0 0 12 12"><path d="M2.200 6.200 L5 9 L10 3.400" fill="none" stroke="#fff" stroke-width="1.700"/></svg>
<div class="t" style="left:178px;top:331px;transform:translateY(0.24px) rotate(0.02deg);height:12.32px;line-height:12.32px;font-size:7.7px;color:#4f4f4f;font-weight:normal;">150</div>
<svg class="r" style="left:216.2px;top:325.17px" width="27.8" height="22.2" viewBox="0 0 27.8 22.2"><defs><filter id="bl2" x="-10%" y="-10%" width="120%" height="120%"><feGaussianBlur stdDeviation="0.95"/></filter><clipPath id="cp2"><rect width="27.8" height="22.2"/></clipPath></defs><g clip-path="url(#cp2)"><rect x="-2" y="-2" width="31.8" height="26.2" fill="#cdbf9c"/><g filter="url(#bl2)">
<rect x="0" y="0" width="21" height="11" fill="#d9c49a"/>
<rect x="0" y="0" width="21" height="2.500" fill="#d9a05e"/>
<rect x="14" y="2" width="7" height="8" fill="#e4d8a8"/>
<rect x="0" y="7.500" width="7.500" height="7" fill="#e6dccb"/>
<rect x="20.500" y="0" width="6" height="13" fill="#3b7b90"/>
<rect x="26" y="0" width="2" height="17" fill="#1c2a30"/>
<rect x="21.500" y="11.500" width="5" height="5" fill="#b02a3a"/>
<path d="M7 16.500 C7 9 9.500 6.200 13.700 6.200 C18 6.200 20.500 9 20.500 16.500 Z" fill="#292926"/>
<rect x="12.600" y="6.500" width="2.300" height="8" fill="#8d8b8b"/>
<ellipse cx="13.700" cy="3.800" rx="2" ry="2.500" fill="#b88a6a"/>
<path d="M11.500 3 C11.500 0 16 0 16 3 C14.500 2 13 2 11.500 3 Z" fill="#2b1f1a"/>
<rect x="0" y="16" width="28" height="4.200" fill="#bfa9b2"/>
<rect x="2" y="17" width="20" height="1.200" fill="#d6cad2"/>
<rect x="0" y="19.800" width="28" height="2.600" fill="#5b516a"/>
</g></g></svg>
<div class="t" style="left:254.6px;top:331px;transform:translateY(0.31px) rotate(0.02deg);height:12.32px;line-height:12.32px;font-size:7.7px;color:#4f4f4f;font-weight:normal;">Ai …</div>
<div class="t" style="left:288.3px;top:331px;transform:translateY(0.28px) rotate(0.02deg);height:12.32px;line-height:12.32px;font-size:7.7px;color:#4f4f4f;font-weight:normal;">0.00</div>
<div class="t" style="left:318px;top:331px;transform:translateY(0.27px) rotate(0.02deg);height:12.32px;line-height:12.32px;font-size:7.7px;color:#4f4f4f;font-weight:normal;width:38.3px;text-align:center;">0</div>
<div class="t" style="left:356.3px;top:331px;transform:translateY(0.27px) rotate(0.02deg);height:12.32px;line-height:12.32px;font-size:7.7px;color:#4f4f4f;font-weight:normal;width:38.2px;text-align:center;">0</div>
<div class="t" style="left:402.9px;top:331px;transform:translateY(0.28px) rotate(0.02deg);height:12.32px;line-height:12.32px;font-size:7.7px;color:#4f4f4f;font-weight:normal;">0.00</div>
<div class="t" style="left:441.6px;top:331px;transform:translateY(0.53px) rotate(0.02deg);height:12.32px;line-height:12.32px;font-size:7.7px;color:#4f4f4f;font-weight:normal;">无</div>
<div class="t" style="left:479.6px;top:331px;transform:translateY(0.45px) rotate(0.02deg);height:12.32px;line-height:12.32px;font-size:7.7px;color:#4f4f4f;font-weight:normal;">男</div>
<div class="r" style="left:152px;top:361.075px;width:7.6px;height:7.6px;background:#1a97e6;border-radius:1px"></div>
<svg class="r" style="left:152.900px;top:361.98px" width="5.800" height="5.800" viewBox="0 0 12 12"><path d="M2.200 6.200 L5 9 L10 3.400" fill="none" stroke="#fff" stroke-width="1.700"/></svg>
<div class="t" style="left:178px;top:359px;transform:translateY(0.45px) rotate(0.02deg);height:12.32px;line-height:12.32px;font-size:7.7px;color:#4f4f4f;font-weight:normal;">149</div>
<svg class="r" style="left:216.2px;top:353.54px" width="27.8" height="22.1" viewBox="0 0 27.8 22.1"><defs><filter id="bl3" x="-10%" y="-10%" width="120%" height="120%"><feGaussianBlur stdDeviation="0.95"/></filter><clipPath id="cp3"><rect width="27.8" height="22.1"/></clipPath></defs><g clip-path="url(#cp3)"><rect x="-2" y="-2" width="31.8" height="26.1" fill="#9a8b79"/><g filter="url(#bl3)">
<rect x="24" y="0" width="4" height="22.100" fill="#8a7c6c"/>
<path d="M22 13 L28 12 L28 22.100 L20 22.100 Z" fill="#6a5c50"/>
<path d="M3 0 L21 0 L18 5 L15 10 L10.500 17 L11 22.100 L0 22.100 L0 7 Z" fill="#2a1b1d"/>
<path d="M0 0 L5 0 L0 8 Z" fill="#8d7d6b"/>
<path d="M19.500 1.500 L25.500 3.500 L26 12 L22.500 20.500 L20 22.100 L11 22.100 L10.500 17 L15 10 L17.500 5 Z" fill="#ebe7df"/>
<ellipse cx="4.800" cy="17.800" rx="3.300" ry="3.300" fill="#1d1214"/>
<ellipse cx="3.600" cy="17.600" rx="1.100" ry="0.900" fill="#8d8186"/>
<path d="M16.400 8.700 L19.200 8.200" stroke="#4a3c3c" stroke-width="0.900"/>
<path d="M20.500 13.500 L21.300 17" stroke="#a79f98" stroke-width="1.100"/>
</g></g></svg>
<div class="t" style="left:254.6px;top:359px;transform:translateY(0.51px) rotate(0.02deg);height:12.32px;line-height:12.32px;font-size:7.7px;color:#4f4f4f;font-weight:normal;">A</div>
<div class="t" style="left:288.3px;top:359px;transform:translateY(0.47px) rotate(0.02deg);height:12.32px;line-height:12.32px;font-size:7.7px;color:#4f4f4f;font-weight:normal;">0.00</div>
<div class="t" style="left:318px;top:359px;transform:translateY(0.48px) rotate(0.02deg);height:12.32px;line-height:12.32px;font-size:7.7px;color:#4f4f4f;font-weight:normal;width:38.3px;text-align:center;">0</div>
<div class="t" style="left:356.3px;top:359px;transform:translateY(0.48px) rotate(0.02deg);height:12.32px;line-height:12.32px;font-size:7.7px;color:#4f4f4f;font-weight:normal;width:38.2px;text-align:center;">0</div>
<div class="t" style="left:402.9px;top:359px;transform:translateY(0.47px) rotate(0.02deg);height:12.32px;line-height:12.32px;font-size:7.7px;color:#4f4f4f;font-weight:normal;">0.00</div>
<div class="t" style="left:441.6px;top:359px;transform:translateY(0.69px) rotate(0.02deg);height:12.32px;line-height:12.32px;font-size:7.7px;color:#4f4f4f;font-weight:normal;">无</div>
<div class="t" style="left:479.6px;top:359px;transform:translateY(0.67px) rotate(0.02deg);height:12.32px;line-height:12.32px;font-size:7.7px;color:#4f4f4f;font-weight:normal;">女</div>
<div class="t" style="left:505.9px;top:359px;transform:translateY(0.48px) rotate(0.02deg);height:12.32px;line-height:12.32px;font-size:7.7px;color:#4f4f4f;font-weight:normal;">2018-08-28 10…</div>
<div class="t" style="left:581.8px;top:359px;transform:translateY(0.48px) rotate(0.02deg);height:12.32px;line-height:12.32px;font-size:7.7px;color:#4f4f4f;font-weight:normal;">2018-08-28 18…</div>
<div class="r" style="left:658.300px;top:358.88px;width:29.000px;height:12.600px;overflow:hidden"><div class="r" style="left:0;top:0;width:36px;height:12.600px;border-radius:6.300px;background:#168de0"></div><div class="r" style="left:21.900px;top:2.500px;width:7.600px;height:7.600px;border-radius:3.800px;background:#fff"></div></div>
<div class="t" style="left:664.0px;top:361px;transform:translateY(0.94px) rotate(0.02deg);height:10.72px;line-height:10.72px;font-size:6.7px;color:#fff;font-weight:bold;">正常</div>
<div class="r" style="left:696.100px;top:359.27px;width:30.000px;height:11.800px;overflow:hidden"><div class="r" style="left:0;top:0;width:44px;height:11.800px;border-radius:5.900px;background:#168de0"></div></div>
<div class="t" style="left:699.2px;top:360px;transform:translateY(0.70px) rotate(0.02deg);height:11.20px;line-height:11.20px;font-size:7.0px;color:#fff;font-weight:bold;width:26.900px;overflow:hidden;">小程序类</div>
<div class="r" style="left:734.9px;top:359.275px;width:28.2px;height:12.0px;background:#1a9d86;border-radius:1.400px"></div>
<svg class="r" style="left:738.6px;top:362.38px" width="6" height="6" viewBox="0 0 6 6"><path d="M0.700 5.300 L5.300 0.700" stroke="#fff" stroke-width="1.150" fill="none"/><path d="M0.200 5.800 L0.500 4.400 L1.600 5.500 Z" fill="#fff"/></svg>
<div class="t" style="left:746.9px;top:362px;transform:translateY(0.27px) rotate(0.02deg);height:10.56px;line-height:10.56px;font-size:6.6px;color:#fff;font-weight:bold;">编辑</div>
<div class="r" style="left:765.3px;top:359.275px;width:11.8px;height:12.0px;background:#1a9d86;border-radius:1.400px"></div>
<svg class="r" style="left:768.4px;top:362.38px" width="6" height="6" viewBox="0 0 6 6"><path d="M0.700 5.300 L5.300 0.700" stroke="#fff" stroke-width="1.150" fill="none"/><path d="M0.200 5.800 L0.500 4.400 L1.600 5.500 Z" fill="#fff"/></svg>
<div class="r" style="left:152px;top:389.34499999999997px;width:7.6px;height:7.6px;background:#1a97e6;border-radius:1px"></div>
<svg class="r" style="left:152.900px;top:390.25px" width="5.800" height="5.800" viewBox="0 0 12 12"><path d="M2.200 6.200 L5 9 L10 3.400" fill="none" stroke="#fff" stroke-width="1.700"/></svg>
<div class="t" style="left:178px;top:387px;transform:translateY(0.59px) rotate(0.02deg);height:12.32px;line-height:12.32px;font-size:7.7px;color:#4f4f4f;font-weight:normal;">148</div>
<svg class="r" style="left:226px;top:391.61px" width="12" height="11" viewBox="0 0 12 11"><defs><filter id="bl4"><feGaussianBlur stdDeviation="0.7"/></filter></defs><g filter="url(#bl4)"><path d="M1.500 1.600 L5.600 1.400 L5.800 4.600 L4.600 7.400 L2.200 7.600 Z" fill="#8a4a44"/><path d="M5.800 1.400 L9.400 1.800 L9.200 5 L6 5.200 Z" fill="#b9c266"/><path d="M5 6.600 L6.800 8.800 L6 9.400 Z" fill="#4a3a6a"/></g></svg>
<div class="t" style="left:254.6px;top:388px;transform:translateY(0.12px) rotate(0.02deg);height:12.32px;line-height:12.32px;font-size:7.7px;color:#4f4f4f;font-weight:normal;">大师</div>
<div class="t" style="left:288.3px;top:387px;transform:translateY(0.59px) rotate(0.02deg);height:12.32px;line-height:12.32px;font-size:7.7px;color:#4f4f4f;font-weight:normal;">0.00</div>
<div class="t" style="left:318px;top:387px;transform:translateY(0.58px) rotate(0.02deg);height:12.32px;line-height:12.32px;font-size:7.7px;color:#4f4f4f;font-weight:normal;width:38.3px;text-align:center;">0</div>
<div class="t" style="left:356.3px;top:387px;transform:translateY(0.58px) rotate(0.02deg);height:12.32px;line-height:12.32px;font-size:7.7px;color:#4f4f4f;font-weight:normal;width:38.2px;text-align:center;">0</div>
<div class="t" style="left:402.9px;top:387px;transform:translateY(0.59px) rotate(0.02deg);height:12.32px;line-height:12.32px;font-size:7.7px;color:#4f4f4f;font-weight:normal;">0.00</div>
<div class="t" style="left:441.6px;top:387px;transform:translateY(0.81px) rotate(0.02deg);height:12.32px;line-height:12.32px;font-size:7.7px;color:#4f4f4f;font-weight:normal;">无</div>
<div class="t" style="left:479.6px;top:387px;transform:translateY(0.72px) rotate(0.02deg);height:12.32px;line-height:12.32px;font-size:7.7px;color:#4f4f4f;font-weight:normal;">男</div>
<div class="t" style="left:505.9px;top:387px;transform:translateY(0.65px) rotate(0.02deg);height:12.32px;line-height:12.32px;font-size:7.7px;color:#4f4f4f;font-weight:normal;">2018-08-27 21…</div>
<div class="t" style="left:581.8px;top:387px;transform:translateY(0.65px) rotate(0.02deg);height:12.32px;line-height:12.32px;font-size:7.7px;color:#4f4f4f;font-weight:normal;">2018-08-27 21…</div>
<div class="r" style="left:658.300px;top:387.14px;width:29.000px;height:12.600px;overflow:hidden"><div class="r" style="left:0;top:0;width:36px;height:12.600px;border-radius:6.300px;background:#168de0"></div><div class="r" style="left:21.900px;top:2.500px;width:7.600px;height:7.600px;border-radius:3.800px;background:#fff"></div></div>
<div class="t" style="left:664.0px;top:390px;transform:translateY(0.29px) rotate(0.02deg);height:10.72px;line-height:10.72px;font-size:6.7px;color:#fff;font-weight:bold;">正常</div>
<div class="r" style="left:696.100px;top:387.54px;width:30.000px;height:11.800px;overflow:hidden"><div class="r" style="left:0;top:0;width:44px;height:11.800px;border-radius:5.900px;background:#168de0"></div></div>
<div class="t" style="left:699.2px;top:389px;transform:translateY(0.10px) rotate(0.02deg);height:11.20px;line-height:11.20px;font-size:7.0px;color:#fff;font-weight:bold;width:26.900px;overflow:hidden;">小程序类</div>
<div class="r" style="left:734.9px;top:387.54499999999996px;width:28.2px;height:12.0px;background:#1a9d86;border-radius:1.400px"></div>
<svg class="r" style="left:738.6px;top:390.64px" width="6" height="6" viewBox="0 0 6 6"><path d="M0.700 5.300 L5.300 0.700" stroke="#fff" stroke-width="1.150" fill="none"/><path d="M0.200 5.800 L0.500 4.400 L1.600 5.500 Z" fill="#fff"/></svg>
<div class="t" style="left:746.9px;top:390px;transform:translateY(0.53px) rotate(0.02deg);height:10.56px;line-height:10.56px;font-size:6.6px;color:#fff;font-weight:bold;">编辑</div>
<div class="r" style="left:765.3px;top:387.54499999999996px;width:11.8px;height:12.0px;background:#1a9d86;border-radius:1.400px"></div>
<svg class="r" style="left:768.4px;top:390.64px" width="6" height="6" viewBox="0 0 6 6"><path d="M0.700 5.300 L5.300 0.700" stroke="#fff" stroke-width="1.150" fill="none"/><path d="M0.200 5.800 L0.500 4.400 L1.600 5.500 Z" fill="#fff"/></svg>
<div class="r" style="left:152px;top:417.61499999999995px;width:7.6px;height:7.6px;background:#fff;border:0.600px solid #e2e2e2;border-radius:1px;box-sizing:border-box"></div>
<div class="t" style="left:178px;top:415px;transform:translateY(0.95px) rotate(0.02deg);height:12.32px;line-height:12.32px;font-size:7.7px;color:#4f4f4f;font-weight:normal;">147</div>
<svg class="r" style="left:214px;top:409.38px" width="32" height="27" viewBox="0 0 32 27"><defs><filter id="bl5"><feGaussianBlur stdDeviation="0.45"/></filter></defs><g filter="url(#bl5)" fill="none" stroke-linecap="round" stroke-linejoin="round"><path d="M23.300 5.700 L18.300 6.700 L17.900 8.700 C19.600 8.600 20.900 9.600 20.600 11.100 C20.200 12.900 16 13.600 13 15 C10.400 16.200 8.500 17.300 8.800 18.900 C9.100 20.500 12 21 14.500 19.500 C16.500 18.300 17 15.600 19.400 14.300 C21 13.600 22.100 14.600 22.700 15.600 C23.900 15 25.300 15.500 27.500 17.400" stroke="#1b2a6e" stroke-width="1.700"/><path d="M17 16 C18.500 14 21 13.800 22.500 15.500 C20 16.500 18.500 18 16 19.500 Z" fill="#1b2a6e" stroke="none"/><path d="M5.400 10.600 C6.400 8.600 9 7.700 11.200 8.600 C13.600 9.700 14 11.600 12.800 13.800 C11.500 16.200 10.600 19 9.200 21.500 C8.400 22.900 7.700 23.800 6.900 24.500" stroke="#c9202b" stroke-width="2"/><path d="M5.400 10.800 C7 8 11 7.600 12.600 9.600 C10.600 9.600 9.500 10.800 9.200 12.600 C8 11.400 6.800 10.900 5.400 10.800 Z" fill="#c9202b" stroke="none"/></g></svg>
<div class="t" style="left:254.6px;top:416px;transform:translateY(0.60px) rotate(0.02deg);height:12.32px;line-height:12.32px;font-size:7.7px;color:#4f4f4f;font-weight:normal;">赏…</div>
<div class="t" style="left:288.3px;top:415px;transform:translateY(0.98px) rotate(0.02deg);height:12.32px;line-height:12.32px;font-size:7.7px;color:#4f4f4f;font-weight:normal;">0.00</div>
<div class="t" style="left:318px;top:415px;transform:translateY(0.86px) rotate(0.02deg);height:12.32px;line-height:12.32px;font-size:7.7px;color:#4f4f4f;font-weight:normal;width:38.3px;text-align:center;">0</div>
<div class="t" style="left:356.3px;top:415px;transform:translateY(0.86px) rotate(0.02deg);height:12.32px;line-height:12.32px;font-size:7.7px;color:#4f4f4f;font-weight:normal;width:38.2px;text-align:center;">0</div>
<div class="t" style="left:402.9px;top:415px;transform:translateY(0.98px) rotate(0.02deg);height:12.32px;line-height:12.32px;font-size:7.7px;color:#4f4f4f;font-weight:normal;">0.00</div>
<div class="t" style="left:441.6px;top:416px;transform:translateY(0.40px) rotate(0.02deg);height:12.32px;line-height:12.32px;font-size:7.7px;color:#4f4f4f;font-weight:normal;">无</div>
<div class="t" style="left:479.6px;top:416px;transform:translateY(0.27px) rotate(0.02deg);height:12.32px;line-height:12.32px;font-size:7.7px;color:#4f4f4f;font-weight:normal;">男</div>
<div class="t" style="left:505.9px;top:416px;transform:translateY(0.03px) rotate(0.02deg);height:12.32px;line-height:12.32px;font-size:7.7px;color:#4f4f4f;font-weight:normal;">2018-08-27 16…</div>
<div class="t" style="left:581.8px;top:416px;transform:translateY(0.03px) rotate(0.02deg);height:12.32px;line-height:12.32px;font-size:7.7px;color:#4f4f4f;font-weight:normal;">2018-08-27 16…</div>
<div class="r" style="left:658.300px;top:415.41px;width:29.000px;height:12.600px;overflow:hidden"><div class="r" style="left:0;top:0;width:36px;height:12.600px;border-radius:6.300px;background:#168de0"></div><div class="r" style="left:21.900px;top:2.500px;width:7.600px;height:7.600px;border-radius:3.800px;background:#fff"></div></div>
<div class="t" style="left:664.0px;top:418px;transform:translateY(0.52px) rotate(0.02deg);height:10.72px;line-height:10.72px;font-size:6.7px;color:#fff;font-weight:bold;">正常</div>
<div class="r" style="left:696.100px;top:415.81px;width:30.000px;height:11.800px;overflow:hidden"><div class="r" style="left:0;top:0;width:44px;height:11.800px;border-radius:5.900px;background:#168de0"></div></div>
<div class="t" style="left:699.2px;top:417px;transform:translateY(0.41px) rotate(0.02deg);height:11.20px;line-height:11.20px;font-size:7.0px;color:#fff;font-weight:bold;width:26.900px;overflow:hidden;">公众号类</div>
<div class="r" style="left:734.9px;top:415.81499999999994px;width:28.2px;height:12.0px;background:#1a9d86;border-radius:1.400px"></div>
<svg class="r" style="left:738.6px;top:418.91px" width="6" height="6" viewBox="0 0 6 6"><path d="M0.700 5.300 L5.300 0.700" stroke="#fff" stroke-width="1.150" fill="none"/><path d="M0.200 5.800 L0.500 4.400 L1.600 5.500 Z" fill="#fff"/></svg>
<div class="t" style="left:746.9px;top:418px;transform:translateY(0.79px) rotate(0.02deg);height:10.56px;line-height:10.56px;font-size:6.6px;color:#fff;font-weight:bold;">编辑</div>
<div class="r" style="left:765.3px;top:415.81499999999994px;width:11.8px;height:12.0px;background:#1a9d86;border-radius:1.400px"></div>
<svg class="r" style="left:768.4px;top:418.91px" width="6" height="6" viewBox="0 0 6 6"><path d="M0.700 5.300 L5.300 0.700" stroke="#fff" stroke-width="1.150" fill="none"/><path d="M0.200 5.800 L0.500 4.400 L1.600 5.500 Z" fill="#fff"/></svg>
<div class="r" style="left:152px;top:445.885px;width:7.6px;height:7.6px;background:#1a97e6;border-radius:1px"></div>
<svg class="r" style="left:152.900px;top:446.79px" width="5.800" height="5.800" viewBox="0 0 12 12"><path d="M2.200 6.200 L5 9 L10 3.400" fill="none" stroke="#fff" stroke-width="1.700"/></svg>
<div class="t" style="left:178px;top:444px;transform:translateY(0.25px) rotate(0.02deg);height:12.32px;line-height:12.32px;font-size:7.7px;color:#4f4f4f;font-weight:normal;">146</div>
<svg class="r" style="left:216.2px;top:438.15px" width="27.8" height="22" viewBox="0 0 27.8 22"><defs><filter id="bl6" x="-10%" y="-10%" width="120%" height="120%"><feGaussianBlur stdDeviation="0.95"/></filter><clipPath id="cp6"><rect width="27.8" height="22"/></clipPath></defs><g clip-path="url(#cp6)"><rect x="-2" y="-2" width="31.8" height="26" fill="#f1f1f1"/><g filter="url(#bl6)">
<rect x="0" y="0" width="2" height="22" fill="#b4b4b4"/>
<rect x="17" y="2" width="4.500" height="8" fill="#d9ddd9"/>
<path d="M13 22 C14 15 18 11.500 28 12 L28 22 Z" fill="#3b6a39"/>
<path d="M15 22 C16 18 19 16.500 22 17 L22 22 Z" fill="#244a26"/>
<ellipse cx="25" cy="17" rx="2.300" ry="3.800" fill="#a3a3a3"/>
<path d="M3.500 22 C2.500 14 3.500 6 8.500 5 C13.500 4.500 14.500 9 14 15 C13.800 18 13 20 12.500 22 Z" fill="#c79a80"/>
<path d="M2.600 11 C1.500 3.500 5.500 0.600 9 0.800 C13.500 1 16 4 15.200 9.500 C14 6.800 11.500 5.600 8.500 6 C5.500 6.500 3.600 8 2.600 11 Z" fill="#27201e"/>
<path d="M5.600 10.600 h2.300 M10 10.600 h2.300" stroke="#6a4436" stroke-width="0.900"/>
<path d="M7.500 17.500 h3" stroke="#9a6258" stroke-width="0.800"/>
</g></g></svg>
<div class="t" style="left:254.6px;top:444px;transform:translateY(0.53px) rotate(0.02deg);height:12.32px;line-height:12.32px;font-size:7.7px;color:#4f4f4f;font-weight:normal;">装…</div>
<div class="t" style="left:288.3px;top:444px;transform:translateY(0.34px) rotate(0.02deg);height:12.32px;line-height:12.32px;font-size:7.7px;color:#4f4f4f;font-weight:normal;">0.00</div>
<div class="t" style="left:318px;top:444px;transform:translateY(0.35px) rotate(0.02deg);height:12.32px;line-height:12.32px;font-size:7.7px;color:#4f4f4f;font-weight:normal;width:38.3px;text-align:center;">0</div>
<div class="t" style="left:356.3px;top:444px;transform:translateY(0.35px) rotate(0.02deg);height:12.32px;line-height:12.32px;font-size:7.7px;color:#4f4f4f;font-weight:normal;width:38.2px;text-align:center;">0</div>
<div class="t" style="left:402.9px;top:444px;transform:translateY(0.34px) rotate(0.02deg);height:12.32px;line-height:12.32px;font-size:7.7px;color:#4f4f4f;font-weight:normal;">0.00</div>
<div class="t" style="left:441.6px;top:444px;transform:translateY(0.59px) rotate(0.02deg);height:12.32px;line-height:12.32px;font-size:7.7px;color:#4f4f4f;font-weight:normal;">无</div>
<div class="t" style="left:479.6px;top:444px;transform:translateY(0.61px) rotate(0.02deg);height:12.32px;line-height:12.32px;font-size:7.7px;color:#4f4f4f;font-weight:normal;">男</div>
<div class="t" style="left:505.9px;top:444px;transform:translateY(0.32px) rotate(0.02deg);height:12.32px;line-height:12.32px;font-size:7.7px;color:#4f4f4f;font-weight:normal;">2018-08-26 22…</div>
<div class="t" style="left:581.8px;top:444px;transform:translateY(0.32px) rotate(0.02deg);height:12.32px;line-height:12.32px;font-size:7.7px;color:#4f4f4f;font-weight:normal;">2018-08-26 22…</div>
<div class="r" style="left:658.300px;top:443.69px;width:29.000px;height:12.600px;overflow:hidden"><div class="r" style="left:0;top:0;width:36px;height:12.600px;border-radius:6.300px;background:#168de0"></div><div class="r" style="left:21.900px;top:2.500px;width:7.600px;height:7.600px;border-radius:3.800px;background:#fff"></div></div>
<div class="t" style="left:664.0px;top:446px;transform:translateY(0.75px) rotate(0.02deg);height:10.72px;line-height:10.72px;font-size:6.7px;color:#fff;font-weight:bold;">正常</div>
<div class="r" style="left:696.100px;top:444.08px;width:30.000px;height:11.800px;overflow:hidden"><div class="r" style="left:0;top:0;width:44px;height:11.800px;border-radius:5.900px;background:#168de0"></div></div>
<div class="t" style="left:699.2px;top:445px;transform:translateY(0.59px) rotate(0.02deg);height:11.20px;line-height:11.20px;font-size:7.0px;color:#fff;font-weight:bold;width:26.900px;overflow:hidden;">公众号类</div>
<div class="r" style="left:734.9px;top:444.085px;width:28.2px;height:12.0px;background:#1a9d86;border-radius:1.400px"></div>
<svg class="r" style="left:738.6px;top:447.19px" width="6" height="6" viewBox="0 0 6 6"><path d="M0.700 5.300 L5.300 0.700" stroke="#fff" stroke-width="1.150" fill="none"/><path d="M0.200 5.800 L0.500 4.400 L1.600 5.500 Z" fill="#fff"/></svg>
<div class="t" style="left:746.9px;top:447px;transform:translateY(0.05px) rotate(0.02deg);height:10.56px;line-height:10.56px;font-size:6.6px;color:#fff;font-weight:bold;">编辑</div>
<div class="r" style="left:765.3px;top:444.085px;width:11.8px;height:12.0px;background:#1a9d86;border-radius:1.400px"></div>
<svg class="r" style="left:768.4px;top:447.19px" width="6" height="6" viewBox="0 0 6 6"><path d="M0.700 5.300 L5.300 0.700" stroke="#fff" stroke-width="1.150" fill="none"/><path d="M0.200 5.800 L0.500 4.400 L1.600 5.500 Z" fill="#fff"/></svg>
<div class="r" style="left:796.5px;top:42.2px;width:3.5px;height:417px;background:#d2d2d2;"></div>
<div class="r" style="left:796.5px;top:42.2px;width:3.5px;height:204.6px;background:#7f7f7f;"></div>
<div id="dp" class="r" style="left:490.9px;top:179.5px;width:302.1px;height:179.0px">
<div class="r" style="left:0.0px;top:25.1px;width:302.1px;height:0.6px;background:#e2e2e2;"></div>
<div class="r" style="left:0.0px;top:153.5px;width:302.1px;height:0.6px;background:#e2e2e2;"></div>
<div class="r" style="left:151.1px;top:25.4px;width:0.6px;height:128.3px;background:#e2e2e2;"></div>
<svg class="r" style="left:12.10px;top:10.70px" width="9.600" height="8" viewBox="0 0 12 10"><path d="M5.600 0.800 L1.200 5 L5.600 9.200 M10.600 0.800 L6.200 5 L10.600 9.200" fill="none" stroke="#888" stroke-width="1.050"/></svg>
<svg class="r" style="left:31.10px;top:10.70px" width="4.800" height="8" viewBox="0 0 6 10"><path d="M5.200 0.800 L0.800 5 L5.200 9.200" fill="none" stroke="#888" stroke-width="1.050"/></svg>
<div class="t" style="left:54.5px;top:8px;transform:translateY(0.75px) rotate(0.02deg);height:12.80px;line-height:12.80px;font-size:8.0px;color:#4d4d4d;font-weight:normal;">2018年&nbsp;&nbsp;8月</div>
<div class="t" style="left:205.7px;top:8px;transform:translateY(0.75px) rotate(0.02deg);height:12.80px;line-height:12.80px;font-size:8.0px;color:#4d4d4d;font-weight:normal;">2018年&nbsp;&nbsp;9月</div>
<svg class="r" style="left:267.50px;top:10.70px" width="4.800" height="8" viewBox="0 0 6 10"><path d="M0.800 0.800 L5.200 5 L0.800 9.200" fill="none" stroke="#888" stroke-width="1.050"/></svg>
<svg class="r" style="left:281.90px;top:10.70px" width="9.600" height="8" viewBox="0 0 12 10"><path d="M1.400 0.800 L5.800 5 L1.400 9.200 M6.400 0.800 L10.800 5 L6.400 9.200" fill="none" stroke="#888" stroke-width="1.050"/></svg>
<div class="t" style="left:6.1px;top:33px;transform:translateY(0.69px) rotate(0.02deg);height:11.84px;line-height:11.84px;font-size:7.4px;color:#333;font-weight:normal;width:19.96px;text-align:center;">日</div>
<div class="t" style="left:26.06px;top:33px;transform:translateY(0.69px) rotate(0.02deg);height:11.84px;line-height:11.84px;font-size:7.4px;color:#333;font-weight:normal;width:19.96px;text-align:center;">一</div>
<div class="t" style="left:46.02px;top:33px;transform:translateY(0.69px) rotate(0.02deg);height:11.84px;line-height:11.84px;font-size:7.4px;color:#333;font-weight:normal;width:19.96px;text-align:center;">二</div>
<div class="t" style="left:65.98px;top:33px;transform:translateY(0.69px) rotate(0.02deg);height:11.84px;line-height:11.84px;font-size:7.4px;color:#333;font-weight:normal;width:19.96px;text-align:center;">三</div>
<div class="t" style="left:85.94px;top:33px;transform:translateY(0.68px) rotate(0.02deg);height:11.84px;line-height:11.84px;font-size:7.4px;color:#333;font-weight:normal;width:19.96px;text-align:center;">四</div>
<div class="t" style="left:105.9px;top:33px;transform:translateY(0.66px) rotate(0.02deg);height:11.84px;line-height:11.84px;font-size:7.4px;color:#333;font-weight:normal;width:19.96px;text-align:center;">五</div>
<div class="t" style="left:125.86px;top:33px;transform:translateY(0.69px) rotate(0.02deg);height:11.84px;line-height:11.84px;font-size:7.4px;color:#333;font-weight:normal;width:19.96px;text-align:center;">六</div>
<div class="t" style="left:6.1px;top:50px;transform:translateY(0.47px) rotate(0.02deg);height:12.32px;line-height:12.32px;font-size:7.7px;color:#d2d2d2;font-weight:normal;width:19.96px;text-align:center;">29</div>
<div class="t" style="left:26.06px;top:50px;transform:translateY(0.51px) rotate(0.02deg);height:12.32px;line-height:12.32px;font-size:7.7px;color:#d2d2d2;font-weight:normal;width:19.96px;text-align:center;">30</div>
<div class="t" style="left:46.02px;top:50px;transform:translateY(0.45px) rotate(0.02deg);height:12.32px;line-height:12.32px;font-size:7.7px;color:#d2d2d2;font-weight:normal;width:19.96px;text-align:center;">31</div>
<div class="r" style="left:65.98px;top:48.1px;width:20.060000000000002px;height:16.76px;background:#00968a;"></div>
<div class="t" style="left:65.98px;top:50px;transform:translateY(0.49px) rotate(0.02deg);height:12.32px;line-height:12.32px;font-size:7.7px;color:#fff;font-weight:bold;width:19.96px;text-align:center;">1</div>
<div class="r" style="left:85.94px;top:48.1px;width:20.060000000000002px;height:16.76px;background:#00f7de;"></div>
<div class="t" style="left:85.94px;top:50px;transform:translateY(0.44px) rotate(0.02deg);height:12.32px;line-height:12.32px;font-size:7.7px;color:#336360;font-weight:normal;width:19.96px;text-align:center;">2</div>
<div class="r" style="left:105.9px;top:48.1px;width:20.060000000000002px;height:16.76px;background:#00f7de;"></div>
<div class="t" style="left:105.9px;top:50px;transform:translateY(0.50px) rotate(0.02deg);height:12.32px;line-height:12.32px;font-size:7.7px;color:#336360;font-weight:normal;width:19.96px;text-align:center;">3</div>
<div class="r" style="left:125.86px;top:48.1px;width:20.060000000000002px;height:16.76px;background:#00f7de;"></div>
<div class="t" style="left:125.86px;top:50px;transform:translateY(0.67px) rotate(0.02deg);height:12.32px;line-height:12.32px;font-size:7.7px;color:#336360;font-weight:normal;width:19.96px;text-align:center;">4</div>
<div class="r" style="left:6.1px;top:64.76px;width:20.060000000000002px;height:16.76px;background:#00f7de;"></div>
<div class="t" style="left:6.1px;top:67px;transform:translateY(0.38px) rotate(0.02deg);height:12.32px;line-height:12.32px;font-size:7.7px;color:#336360;font-weight:normal;width:19.96px;text-align:center;">5</div>
<div class="r" style="left:26.06px;top:64.76px;width:20.060000000000002px;height:16.76px;background:#00f7de;"></div>
<div class="t" style="left:26.06px;top:67px;transform:translateY(0.34px) rotate(0.02deg);height:12.32px;line-height:12.32px;font-size:7.7px;color:#336360;font-weight:normal;width:19.96px;text-align:center;">6</div>
<div class="r" style="left:46.02px;top:64.76px;width:20.060000000000002px;height:16.76px;background:#00f7de;"></div>
<div class="t" style="left:46.02px;top:67px;transform:translateY(0.14px) rotate(0.02deg);height:12.32px;line-height:12.32px;font-size:7.7px;color:#336360;font-weight:normal;width:19.96px;text-align:center;">7</div>
<div class="r" style="left:65.98px;top:64.76px;width:20.060000000000002px;height:16.76px;background:#00f7de;"></div>
<div class="t" style="left:65.98px;top:67px;transform:translateY(0.25px) rotate(0.02deg);height:12.32px;line-height:12.32px;font-size:7.7px;color:#336360;font-weight:normal;width:19.96px;text-align:center;">8</div>
<div class="r" style="left:85.94px;top:64.76px;width:20.060000000000002px;height:16.76px;background:#00f7de;"></div>
<div class="t" style="left:85.94px;top:67px;transform:translateY(0.65px) rotate(0.02deg);height:12.32px;line-height:12.32px;font-size:7.7px;color:#336360;font-weight:normal;width:19.96px;text-align:center;">9</div>
<div class="r" style="left:105.9px;top:64.76px;width:20.060000000000002px;height:16.76px;background:#00f7de;"></div>
<div class="t" style="left:105.9px;top:67px;transform:translateY(0.25px) rotate(0.02deg);height:12.32px;line-height:12.32px;font-size:7.7px;color:#336360;font-weight:normal;width:19.96px;text-align:center;">10</div>
<div class="r" style="left:125.86px;top:64.76px;width:20.060000000000002px;height:16.76px;background:#00f7de;"></div>
<div class="t" style="left:125.86px;top:67px;transform:translateY(0.15px) rotate(0.02deg);height:12.32px;line-height:12.32px;font-size:7.7px;color:#336360;font-weight:normal;width:19.96px;text-align:center;">11</div>
<div class="r" style="left:6.1px;top:81.42px;width:20.060000000000002px;height:16.76px;background:#00f7de;"></div>
<div class="t" style="left:6.1px;top:83px;transform:translateY(0.73px) rotate(0.02deg);height:12.32px;line-height:12.32px;font-size:7.7px;color:#336360;font-weight:normal;width:19.96px;text-align:center;">12</div>
<div class="r" style="left:26.06px;top:81.42px;width:20.060000000000002px;height:16.76px;background:#00f7de;"></div>
<div class="t" style="left:26.06px;top:83px;transform:translateY(0.70px) rotate(0.02deg);height:12.32px;line-height:12.32px;font-size:7.7px;color:#336360;font-weight:normal;width:19.96px;text-align:center;">13</div>
<div class="r" style="left:46.02px;top:81.42px;width:20.060000000000002px;height:16.76px;background:#00f7de;"></div>
<div class="t" style="left:46.02px;top:83px;transform:translateY(0.78px) rotate(0.02deg);height:12.32px;line-height:12.32px;font-size:7.7px;color:#336360;font-weight:normal;width:19.96px;text-align:center;">14</div>
<div class="r" style="left:65.98px;top:81.42px;width:20.060000000000002px;height:16.76px;background:#00f7de;"></div>
<div class="t" style="left:65.98px;top:83px;transform:translateY(0.71px) rotate(0.02deg);height:12.32px;line-height:12.32px;font-size:7.7px;color:#336360;font-weight:normal;width:19.96px;text-align:center;">15</div>
<div class="r" style="left:85.94px;top:81.42px;width:20.060000000000002px;height:16.76px;background:#00f7de;"></div>
<div class="t" style="left:85.94px;top:83px;transform:translateY(0.69px) rotate(0.02deg);height:12.32px;line-height:12.32px;font-size:7.7px;color:#336360;font-weight:normal;width:19.96px;text-align:center;">16</div>
<div class="r" style="left:105.9px;top:81.42px;width:20.060000000000002px;height:16.76px;background:#00f7de;"></div>
<div class="t" style="left:105.9px;top:83px;transform:translateY(0.85px) rotate(0.02deg);height:12.32px;line-height:12.32px;font-size:7.7px;color:#336360;font-weight:normal;width:19.96px;text-align:center;">17</div>
<div class="r" style="left:125.86px;top:81.42px;width:20.060000000000002px;height:16.76px;background:#00f7de;"></div>
<div class="t" style="left:125.86px;top:83px;transform:translateY(0.70px) rotate(0.02deg);height:12.32px;line-height:12.32px;font-size:7.7px;color:#336360;font-weight:normal;width:19.96px;text-align:center;">18</div>
<div class="r" style="left:6.1px;top:98.08px;width:20.060000000000002px;height:16.76px;background:#00f7de;"></div>
<div class="t" style="left:6.1px;top:100px;transform:translateY(0.55px) rotate(0.02deg);height:12.32px;line-height:12.32px;font-size:7.7px;color:#336360;font-weight:normal;width:19.96px;text-align:center;">19</div>
<div class="r" style="left:26.06px;top:98.08px;width:20.060000000000002px;height:16.76px;background:#00f7de;"></div>
<div class="t" style="left:26.06px;top:100px;transform:translateY(0.45px) rotate(0.02deg);height:12.32px;line-height:12.32px;font-size:7.7px;color:#336360;font-weight:normal;width:19.96px;text-align:center;">20</div>
<div class="r" style="left:46.02px;top:98.08px;width:20.060000000000002px;height:16.76px;background:#00f7de;"></div>
<div class="t" style="left:46.02px;top:100px;transform:translateY(0.44px) rotate(0.02deg);height:12.32px;line-height:12.32px;font-size:7.7px;color:#336360;font-weight:normal;width:19.96px;text-align:center;">21</div>
<div class="r" style="left:65.98px;top:98.08px;width:20.060000000000002px;height:16.76px;background:#00f7de;"></div>
<div class="t" style="left:65.98px;top:100px;transform:translateY(0.42px) rotate(0.02deg);height:12.32px;line-height:12.32px;font-size:7.7px;color:#336360;font-weight:normal;width:19.96px;text-align:center;">22</div>
<div class="r" style="left:85.94px;top:98.08px;width:20.060000000000002px;height:16.76px;background:#00f7de;"></div>
<div class="t" style="left:85.94px;top:100px;transform:translateY(0.43px) rotate(0.02deg);height:12.32px;line-height:12.32px;font-size:7.7px;color:#336360;font-weight:normal;width:19.96px;text-align:center;">23</div>
<div class="r" style="left:105.9px;top:98.08px;width:20.060000000000002px;height:16.76px;background:#00f7de;"></div>
<div class="t" style="left:105.9px;top:100px;transform:translateY(0.51px) rotate(0.02deg);height:12.32px;line-height:12.32px;font-size:7.7px;color:#336360;font-weight:normal;width:19.96px;text-align:center;">24</div>
<div class="r" style="left:125.86px;top:98.08px;width:20.060000000000002px;height:16.76px;background:#00f7de;"></div>
<div class="t" style="left:125.86px;top:100px;transform:translateY(0.47px) rotate(0.02deg);height:12.32px;line-height:12.32px;font-size:7.7px;color:#336360;font-weight:normal;width:19.96px;text-align:center;">25</div>
<div class="r" style="left:6.1px;top:114.74px;width:20.060000000000002px;height:16.76px;background:#00f7de;"></div>
<div class="t" style="left:6.1px;top:117px;transform:translateY(0.17px) rotate(0.02deg);height:12.32px;line-height:12.32px;font-size:7.7px;color:#336360;font-weight:normal;width:19.96px;text-align:center;">26</div>
<div class="r" style="left:26.06px;top:114.74px;width:20.060000000000002px;height:16.76px;background:#00f7de;"></div>
<div class="t" style="left:26.06px;top:117px;transform:translateY(0.27px) rotate(0.02deg);height:12.32px;line-height:12.32px;font-size:7.7px;color:#336360;font-weight:normal;width:19.96px;text-align:center;">27</div>
<div class="r" style="left:46.02px;top:114.74px;width:20.060000000000002px;height:16.76px;background:#00f7de;"></div>
<div class="t" style="left:46.02px;top:117px;transform:translateY(0.16px) rotate(0.02deg);height:12.32px;line-height:12.32px;font-size:7.7px;color:#336360;font-weight:normal;width:19.96px;text-align:center;">28</div>
<div class="r" style="left:65.98px;top:114.74px;width:20.060000000000002px;height:16.76px;background:#00f7de;"></div>
<div class="t" style="left:65.98px;top:117px;transform:translateY(0.11px) rotate(0.02deg);height:12.32px;line-height:12.32px;font-size:7.7px;color:#336360;font-weight:normal;width:19.96px;text-align:center;">29</div>
<div class="r" style="left:85.94px;top:114.74px;width:20.060000000000002px;height:16.76px;background:#00f7de;"></div>
<div class="t" style="left:85.94px;top:117px;transform:translateY(0.25px) rotate(0.02deg);height:12.32px;line-height:12.32px;font-size:7.7px;color:#336360;font-weight:normal;width:19.96px;text-align:center;">30</div>
<div class="r" style="left:105.9px;top:114.74px;width:20.060000000000002px;height:16.76px;background:#00f7de;"></div>
<div class="t" style="left:105.9px;top:117px;transform:translateY(0.11px) rotate(0.02deg);height:12.32px;line-height:12.32px;font-size:7.7px;color:#336360;font-weight:normal;width:19.96px;text-align:center;">31</div>
<div class="r" style="left:125.86px;top:114.74px;width:20.060000000000002px;height:16.76px;background:#f6f6f5;"></div>
<div class="t" style="left:125.86px;top:117px;transform:translateY(0.22px) rotate(0.02deg);height:12.32px;line-height:12.32px;font-size:7.7px;color:#d2d2d2;font-weight:normal;width:19.96px;text-align:center;">1</div>
<div class="r" style="left:6.1px;top:131.4px;width:20.060000000000002px;height:16.76px;background:#f6f6f5;"></div>
<div class="t" style="left:6.1px;top:133px;transform:translateY(0.66px) rotate(0.02deg);height:12.32px;line-height:12.32px;font-size:7.7px;color:#d2d2d2;font-weight:normal;width:19.96px;text-align:center;">2</div>
<div class="r" style="left:26.06px;top:131.4px;width:20.060000000000002px;height:16.76px;background:#f6f6f5;"></div>
<div class="t" style="left:26.06px;top:133px;transform:translateY(0.70px) rotate(0.02deg);height:12.32px;line-height:12.32px;font-size:7.7px;color:#d2d2d2;font-weight:normal;width:19.96px;text-align:center;">3</div>
<div class="r" style="left:46.02px;top:131.4px;width:20.060000000000002px;height:16.76px;background:#f6f6f5;"></div>
<div class="t" style="left:46.02px;top:133px;transform:translateY(0.92px) rotate(0.02deg);height:12.32px;line-height:12.32px;font-size:7.7px;color:#d2d2d2;font-weight:normal;width:19.96px;text-align:center;">4</div>
<div class="r" style="left:65.98px;top:131.4px;width:20.060000000000002px;height:16.76px;background:#f6f6f5;"></div>
<div class="t" style="left:65.98px;top:133px;transform:translateY(0.76px) rotate(0.02deg);height:12.32px;line-height:12.32px;font-size:7.7px;color:#d2d2d2;font-weight:normal;width:19.96px;text-align:center;">5</div>
<div class="r" style="left:85.94px;top:131.4px;width:20.060000000000002px;height:16.76px;background:#f6f6f5;"></div>
<div class="t" style="left:85.94px;top:133px;transform:translateY(0.64px) rotate(0.02deg);height:12.32px;line-height:12.32px;font-size:7.7px;color:#d2d2d2;font-weight:normal;width:19.96px;text-align:center;">6</div>
<div class="r" style="left:105.9px;top:131.4px;width:20.060000000000002px;height:16.76px;background:#f6f6f5;"></div>
<div class="t" style="left:105.9px;top:133px;transform:translateY(0.76px) rotate(0.02deg);height:12.32px;line-height:12.32px;font-size:7.7px;color:#d2d2d2;font-weight:normal;width:19.96px;text-align:center;">7</div>
<div class="r" style="left:125.86px;top:131.4px;width:20.060000000000002px;height:16.76px;background:#f6f6f5;"></div>
<div class="t" style="left:125.86px;top:133px;transform:translateY(0.70px) rotate(0.02deg);height:12.32px;line-height:12.32px;font-size:7.7px;color:#d2d2d2;font-weight:normal;width:19.96px;text-align:center;">8</div>
<div class="t" style="left:157.6px;top:33px;transform:translateY(0.69px) rotate(0.02deg);height:11.84px;line-height:11.84px;font-size:7.4px;color:#333;font-weight:normal;width:19.96px;text-align:center;">日</div>
<div class="t" style="left:177.56px;top:33px;transform:translateY(0.69px) rotate(0.02deg);height:11.84px;line-height:11.84px;font-size:7.4px;color:#333;font-weight:normal;width:19.96px;text-align:center;">一</div>
<div class="t" style="left:197.52px;top:33px;transform:translateY(0.69px) rotate(0.02deg);height:11.84px;line-height:11.84px;font-size:7.4px;color:#333;font-weight:normal;width:19.96px;text-align:center;">二</div>
<div class="t" style="left:217.48px;top:33px;transform:translateY(0.69px) rotate(0.02deg);height:11.84px;line-height:11.84px;font-size:7.4px;color:#333;font-weight:normal;width:19.96px;text-align:center;">三</div>
<div class="t" style="left:237.44px;top:33px;transform:translateY(0.68px) rotate(0.02deg);height:11.84px;line-height:11.84px;font-size:7.4px;color:#333;font-weight:normal;width:19.96px;text-align:center;">四</div>
<div class="t" style="left:257.4px;top:33px;transform:translateY(0.66px) rotate(0.02deg);height:11.84px;line-height:11.84px;font-size:7.4px;color:#333;font-weight:normal;width:19.96px;text-align:center;">五</div>
<div class="t" style="left:277.36px;top:33px;transform:translateY(0.69px) rotate(0.02deg);height:11.84px;line-height:11.84px;font-size:7.4px;color:#333;font-weight:normal;width:19.96px;text-align:center;">六</div>
<div class="r" style="left:157.6px;top:48.1px;width:20.060000000000002px;height:16.76px;background:#f6f6f5;"></div>
<div class="t" style="left:157.6px;top:50px;transform:translateY(0.45px) rotate(0.02deg);height:12.32px;line-height:12.32px;font-size:7.7px;color:#d2d2d2;font-weight:normal;width:19.96px;text-align:center;">26</div>
<div class="r" style="left:177.56px;top:48.1px;width:20.060000000000002px;height:16.76px;background:#f6f6f5;"></div>
<div class="t" style="left:177.56px;top:50px;transform:translateY(0.53px) rotate(0.02deg);height:12.32px;line-height:12.32px;font-size:7.7px;color:#d2d2d2;font-weight:normal;width:19.96px;text-align:center;">27</div>
<div class="r" style="left:197.52px;top:48.1px;width:20.060000000000002px;height:16.76px;background:#f6f6f5;"></div>
<div class="t" style="left:197.52px;top:50px;transform:translateY(0.44px) rotate(0.02deg);height:12.32px;line-height:12.32px;font-size:7.7px;color:#d2d2d2;font-weight:normal;width:19.96px;text-align:center;">28</div>
<div class="r" style="left:217.48px;top:48.1px;width:20.060000000000002px;height:16.76px;background:#f6f6f5;"></div>
<div class="t" style="left:217.48px;top:50px;transform:translateY(0.47px) rotate(0.02deg);height:12.32px;line-height:12.32px;font-size:7.7px;color:#d2d2d2;font-weight:normal;width:19.96px;text-align:center;">29</div>
<div class="r" style="left:237.44px;top:48.1px;width:20.060000000000002px;height:16.76px;background:#f6f6f5;"></div>
<div class="t" style="left:237.44px;top:50px;transform:translateY(0.51px) rotate(0.02deg);height:12.32px;line-height:12.32px;font-size:7.7px;color:#d2d2d2;font-weight:normal;width:19.96px;text-align:center;">30</div>
<div class="r" style="left:257.4px;top:48.1px;width:20.060000000000002px;height:16.76px;background:#f6f6f5;"></div>
<div class="t" style="left:257.4px;top:50px;transform:translateY(0.45px) rotate(0.02deg);height:12.32px;line-height:12.32px;font-size:7.7px;color:#d2d2d2;font-weight:normal;width:19.96px;text-align:center;">31</div>
<div class="r" style="left:277.36px;top:48.1px;width:20.060000000000002px;height:16.76px;background:#00f7de;"></div>
<div class="t" style="left:277.36px;top:50px;transform:translateY(0.50px) rotate(0.02deg);height:12.32px;line-height:12.32px;font-size:7.7px;color:#336360;font-weight:normal;width:19.96px;text-align:center;">1</div>
<div class="r" style="left:157.6px;top:64.76px;width:20.060000000000002px;height:16.76px;background:#00f7de;"></div>
<div class="t" style="left:157.6px;top:67px;transform:translateY(0.15px) rotate(0.02deg);height:12.32px;line-height:12.32px;font-size:7.7px;color:#336360;font-weight:normal;width:19.96px;text-align:center;">2</div>
<div class="r" style="left:177.56px;top:64.76px;width:20.060000000000002px;height:16.76px;background:#00f7de;"></div>
<div class="t" style="left:177.56px;top:67px;transform:translateY(0.29px) rotate(0.02deg);height:12.32px;line-height:12.32px;font-size:7.7px;color:#336360;font-weight:normal;width:19.96px;text-align:center;">3</div>
<div class="r" style="left:197.52px;top:64.76px;width:20.060000000000002px;height:16.76px;background:#00f7de;"></div>
<div class="t" style="left:197.52px;top:67px;transform:translateY(0.40px) rotate(0.02deg);height:12.32px;line-height:12.32px;font-size:7.7px;color:#336360;font-weight:normal;width:19.96px;text-align:center;">4</div>
<div class="r" style="left:217.48px;top:64.76px;width:20.060000000000002px;height:16.76px;background:#00f7de;"></div>
<div class="t" style="left:217.48px;top:67px;transform:translateY(0.38px) rotate(0.02deg);height:12.32px;line-height:12.32px;font-size:7.7px;color:#336360;font-weight:normal;width:19.96px;text-align:center;">5</div>
<div class="r" style="left:237.44px;top:64.76px;width:20.060000000000002px;height:16.76px;background:#00f7de;"></div>
<div class="t" style="left:237.44px;top:67px;transform:translateY(0.34px) rotate(0.02deg);height:12.32px;line-height:12.32px;font-size:7.7px;color:#336360;font-weight:normal;width:19.96px;text-align:center;">6</div>
<div class="r" style="left:257.4px;top:64.76px;width:20.060000000000002px;height:16.76px;background:#00f7de;"></div>
<div class="t" style="left:257.4px;top:67px;transform:translateY(0.14px) rotate(0.02deg);height:12.32px;line-height:12.32px;font-size:7.7px;color:#336360;font-weight:normal;width:19.96px;text-align:center;">7</div>
<div class="r" style="left:277.36px;top:64.76px;width:20.060000000000002px;height:16.76px;background:#00f7de;"></div>
<div class="t" style="left:277.36px;top:67px;transform:translateY(0.25px) rotate(0.02deg);height:12.32px;line-height:12.32px;font-size:7.7px;color:#336360;font-weight:normal;width:19.96px;text-align:center;">8</div>
<div class="r" style="left:157.6px;top:81.42px;width:20.060000000000002px;height:16.76px;background:#00f7de;"></div>
<div class="t" style="left:157.6px;top:83px;transform:translateY(0.88px) rotate(0.02deg);height:12.32px;line-height:12.32px;font-size:7.7px;color:#336360;font-weight:normal;width:19.96px;text-align:center;">9</div>
<div class="r" style="left:177.56px;top:81.42px;width:20.060000000000002px;height:16.76px;background:#00f7de;"></div>
<div class="t" style="left:177.56px;top:83px;transform:translateY(0.71px) rotate(0.02deg);height:12.32px;line-height:12.32px;font-size:7.7px;color:#336360;font-weight:normal;width:19.96px;text-align:center;">10</div>
<div class="r" style="left:197.52px;top:81.42px;width:20.060000000000002px;height:16.76px;background:#00f7de;"></div>
<div class="t" style="left:197.52px;top:83px;transform:translateY(0.68px) rotate(0.02deg);height:12.32px;line-height:12.32px;font-size:7.7px;color:#336360;font-weight:normal;width:19.96px;text-align:center;">11</div>
<div class="r" style="left:217.48px;top:81.42px;width:20.060000000000002px;height:16.76px;background:#00f7de;"></div>
<div class="t" style="left:217.48px;top:83px;transform:translateY(0.73px) rotate(0.02deg);height:12.32px;line-height:12.32px;font-size:7.7px;color:#336360;font-weight:normal;width:19.96px;text-align:center;">12</div>
<div class="r" style="left:237.44px;top:81.42px;width:20.060000000000002px;height:16.76px;background:#00f7de;"></div>
<div class="t" style="left:237.44px;top:83px;transform:translateY(0.70px) rotate(0.02deg);height:12.32px;line-height:12.32px;font-size:7.7px;color:#336360;font-weight:normal;width:19.96px;text-align:center;">13</div>
<div class="r" style="left:257.4px;top:81.42px;width:20.060000000000002px;height:16.76px;background:#00f7de;"></div>
<div class="t" style="left:257.4px;top:83px;transform:translateY(0.78px) rotate(0.02deg);height:12.32px;line-height:12.32px;font-size:7.7px;color:#336360;font-weight:normal;width:19.96px;text-align:center;">14</div>
<div class="r" style="left:277.36px;top:81.42px;width:20.060000000000002px;height:16.76px;background:#00f7de;"></div>
<div class="t" style="left:277.36px;top:83px;transform:translateY(0.71px) rotate(0.02deg);height:12.32px;line-height:12.32px;font-size:7.7px;color:#336360;font-weight:normal;width:19.96px;text-align:center;">15</div>
<div class="r" style="left:157.6px;top:98.08px;width:20.060000000000002px;height:16.76px;background:#00f7de;"></div>
<div class="t" style="left:157.6px;top:100px;transform:translateY(0.52px) rotate(0.02deg);height:12.32px;line-height:12.32px;font-size:7.7px;color:#336360;font-weight:normal;width:19.96px;text-align:center;">16</div>
<div class="r" style="left:177.56px;top:98.08px;width:20.060000000000002px;height:16.76px;background:#00f7de;"></div>
<div class="t" style="left:177.56px;top:100px;transform:translateY(0.57px) rotate(0.02deg);height:12.32px;line-height:12.32px;font-size:7.7px;color:#336360;font-weight:normal;width:19.96px;text-align:center;">17</div>
<div class="r" style="left:197.52px;top:98.08px;width:20.060000000000002px;height:16.76px;background:#00f7de;"></div>
<div class="t" style="left:197.52px;top:100px;transform:translateY(0.48px) rotate(0.02deg);height:12.32px;line-height:12.32px;font-size:7.7px;color:#336360;font-weight:normal;width:19.96px;text-align:center;">18</div>
<div class="r" style="left:217.48px;top:98.08px;width:20.060000000000002px;height:16.76px;background:#00f7de;"></div>
<div class="t" style="left:217.48px;top:100px;transform:translateY(0.55px) rotate(0.02deg);height:12.32px;line-height:12.32px;font-size:7.7px;color:#336360;font-weight:normal;width:19.96px;text-align:center;">19</div>
<div class="r" style="left:237.44px;top:98.08px;width:20.060000000000002px;height:16.76px;background:#00f7de;"></div>
<div class="t" style="left:237.44px;top:100px;transform:translateY(0.45px) rotate(0.02deg);height:12.32px;line-height:12.32px;font-size:7.7px;color:#336360;font-weight:normal;width:19.96px;text-align:center;">20</div>
<div class="r" style="left:257.4px;top:98.08px;width:20.060000000000002px;height:16.76px;background:#00f7de;"></div>
<div class="t" style="left:257.4px;top:100px;transform:translateY(0.44px) rotate(0.02deg);height:12.32px;line-height:12.32px;font-size:7.7px;color:#336360;font-weight:normal;width:19.96px;text-align:center;">21</div>
<div class="r" style="left:277.36px;top:98.08px;width:20.060000000000002px;height:16.76px;background:#00f7de;"></div>
<div class="t" style="left:277.36px;top:100px;transform:translateY(0.42px) rotate(0.02deg);height:12.32px;line-height:12.32px;font-size:7.7px;color:#336360;font-weight:normal;width:19.96px;text-align:center;">22</div>
<div class="r" style="left:157.6px;top:114.74px;width:20.060000000000002px;height:16.76px;background:#00968a;"></div>
<div class="t" style="left:157.6px;top:117px;transform:translateY(0.20px) rotate(0.02deg);height:12.32px;line-height:12.32px;font-size:7.7px;color:#fff;font-weight:bold;width:19.96px;text-align:center;">23</div>
<div class="t" style="left:177.56px;top:117px;transform:translateY(0.28px) rotate(0.02deg);height:12.32px;line-height:12.32px;font-size:7.7px;color:#555;font-weight:normal;width:19.96px;text-align:center;">24</div>
<div class="t" style="left:197.52px;top:117px;transform:translateY(0.18px) rotate(0.02deg);height:12.32px;line-height:12.32px;font-size:7.7px;color:#555;font-weight:normal;width:19.96px;text-align:center;">25</div>
<div class="t" style="left:217.48px;top:117px;transform:translateY(0.17px) rotate(0.02deg);height:12.32px;line-height:12.32px;font-size:7.7px;color:#555;font-weight:normal;width:19.96px;text-align:center;">26</div>
<div class="t" style="left:237.44px;top:117px;transform:translateY(0.27px) rotate(0.02deg);height:12.32px;line-height:12.32px;font-size:7.7px;color:#555;font-weight:normal;width:19.96px;text-align:center;">27</div>
<div class="t" style="left:257.4px;top:117px;transform:translateY(0.16px) rotate(0.02deg);height:12.32px;line-height:12.32px;font-size:7.7px;color:#555;font-weight:normal;width:19.96px;text-align:center;">28</div>
<div class="t" style="left:277.36px;top:117px;transform:translateY(0.11px) rotate(0.02deg);height:12.32px;line-height:12.32px;font-size:7.7px;color:#555;font-weight:normal;width:19.96px;text-align:center;">29</div>
<div class="t" style="left:157.6px;top:133px;transform:translateY(0.67px) rotate(0.02deg);height:12.32px;line-height:12.32px;font-size:7.7px;color:#555;font-weight:normal;width:19.96px;text-align:center;">30</div>
<div class="t" style="left:177.56px;top:133px;transform:translateY(0.72px) rotate(0.02deg);height:12.32px;line-height:12.32px;font-size:7.7px;color:#d2d2d2;font-weight:normal;width:19.96px;text-align:center;">1</div>
<div class="t" style="left:197.52px;top:133px;transform:translateY(0.66px) rotate(0.02deg);height:12.32px;line-height:12.32px;font-size:7.7px;color:#d2d2d2;font-weight:normal;width:19.96px;text-align:center;">2</div>
<div class="t" style="left:217.48px;top:133px;transform:translateY(0.70px) rotate(0.02deg);height:12.32px;line-height:12.32px;font-size:7.7px;color:#d2d2d2;font-weight:normal;width:19.96px;text-align:center;">3</div>
<div class="t" style="left:237.44px;top:133px;transform:translateY(0.92px) rotate(0.02deg);height:12.32px;line-height:12.32px;font-size:7.7px;color:#d2d2d2;font-weight:normal;width:19.96px;text-align:center;">4</div>
<div class="t" style="left:257.4px;top:133px;transform:translateY(0.76px) rotate(0.02deg);height:12.32px;line-height:12.32px;font-size:7.7px;color:#d2d2d2;font-weight:normal;width:19.96px;text-align:center;">5</div>
<div class="t" style="left:277.36px;top:133px;transform:translateY(0.64px) rotate(0.02deg);height:12.32px;line-height:12.32px;font-size:7.7px;color:#d2d2d2;font-weight:normal;width:19.96px;text-align:center;">6</div>
<div class="r" style="left:246.9px;top:160.1px;width:25.4px;height:14.2px;background:#fff;border:0.600px solid #d6d6d6;box-sizing:border-box;border-radius:1px 0 0 1px"></div>
<div class="r" style="left:272.3px;top:160.1px;width:25.1px;height:14.2px;background:#fff;border:0.600px solid #d6d6d6;border-left:none;box-sizing:border-box;border-radius:0 1px 1px 0"></div>
<div class="t" style="left:246.9px;top:163px;transform:translateY(0.23px) rotate(0.02deg);height:10.56px;line-height:10.56px;font-size:6.6px;color:#666;font-weight:normal;width:25.4px;text-align:center;">清空</div>
<div class="t" style="left:272.0px;top:163px;transform:translateY(0.06px) rotate(0.02deg);height:10.56px;line-height:10.56px;font-size:6.6px;color:#666;font-weight:normal;width:25.4px;text-align:center;">确定</div>
</div>
</div></body></html>
